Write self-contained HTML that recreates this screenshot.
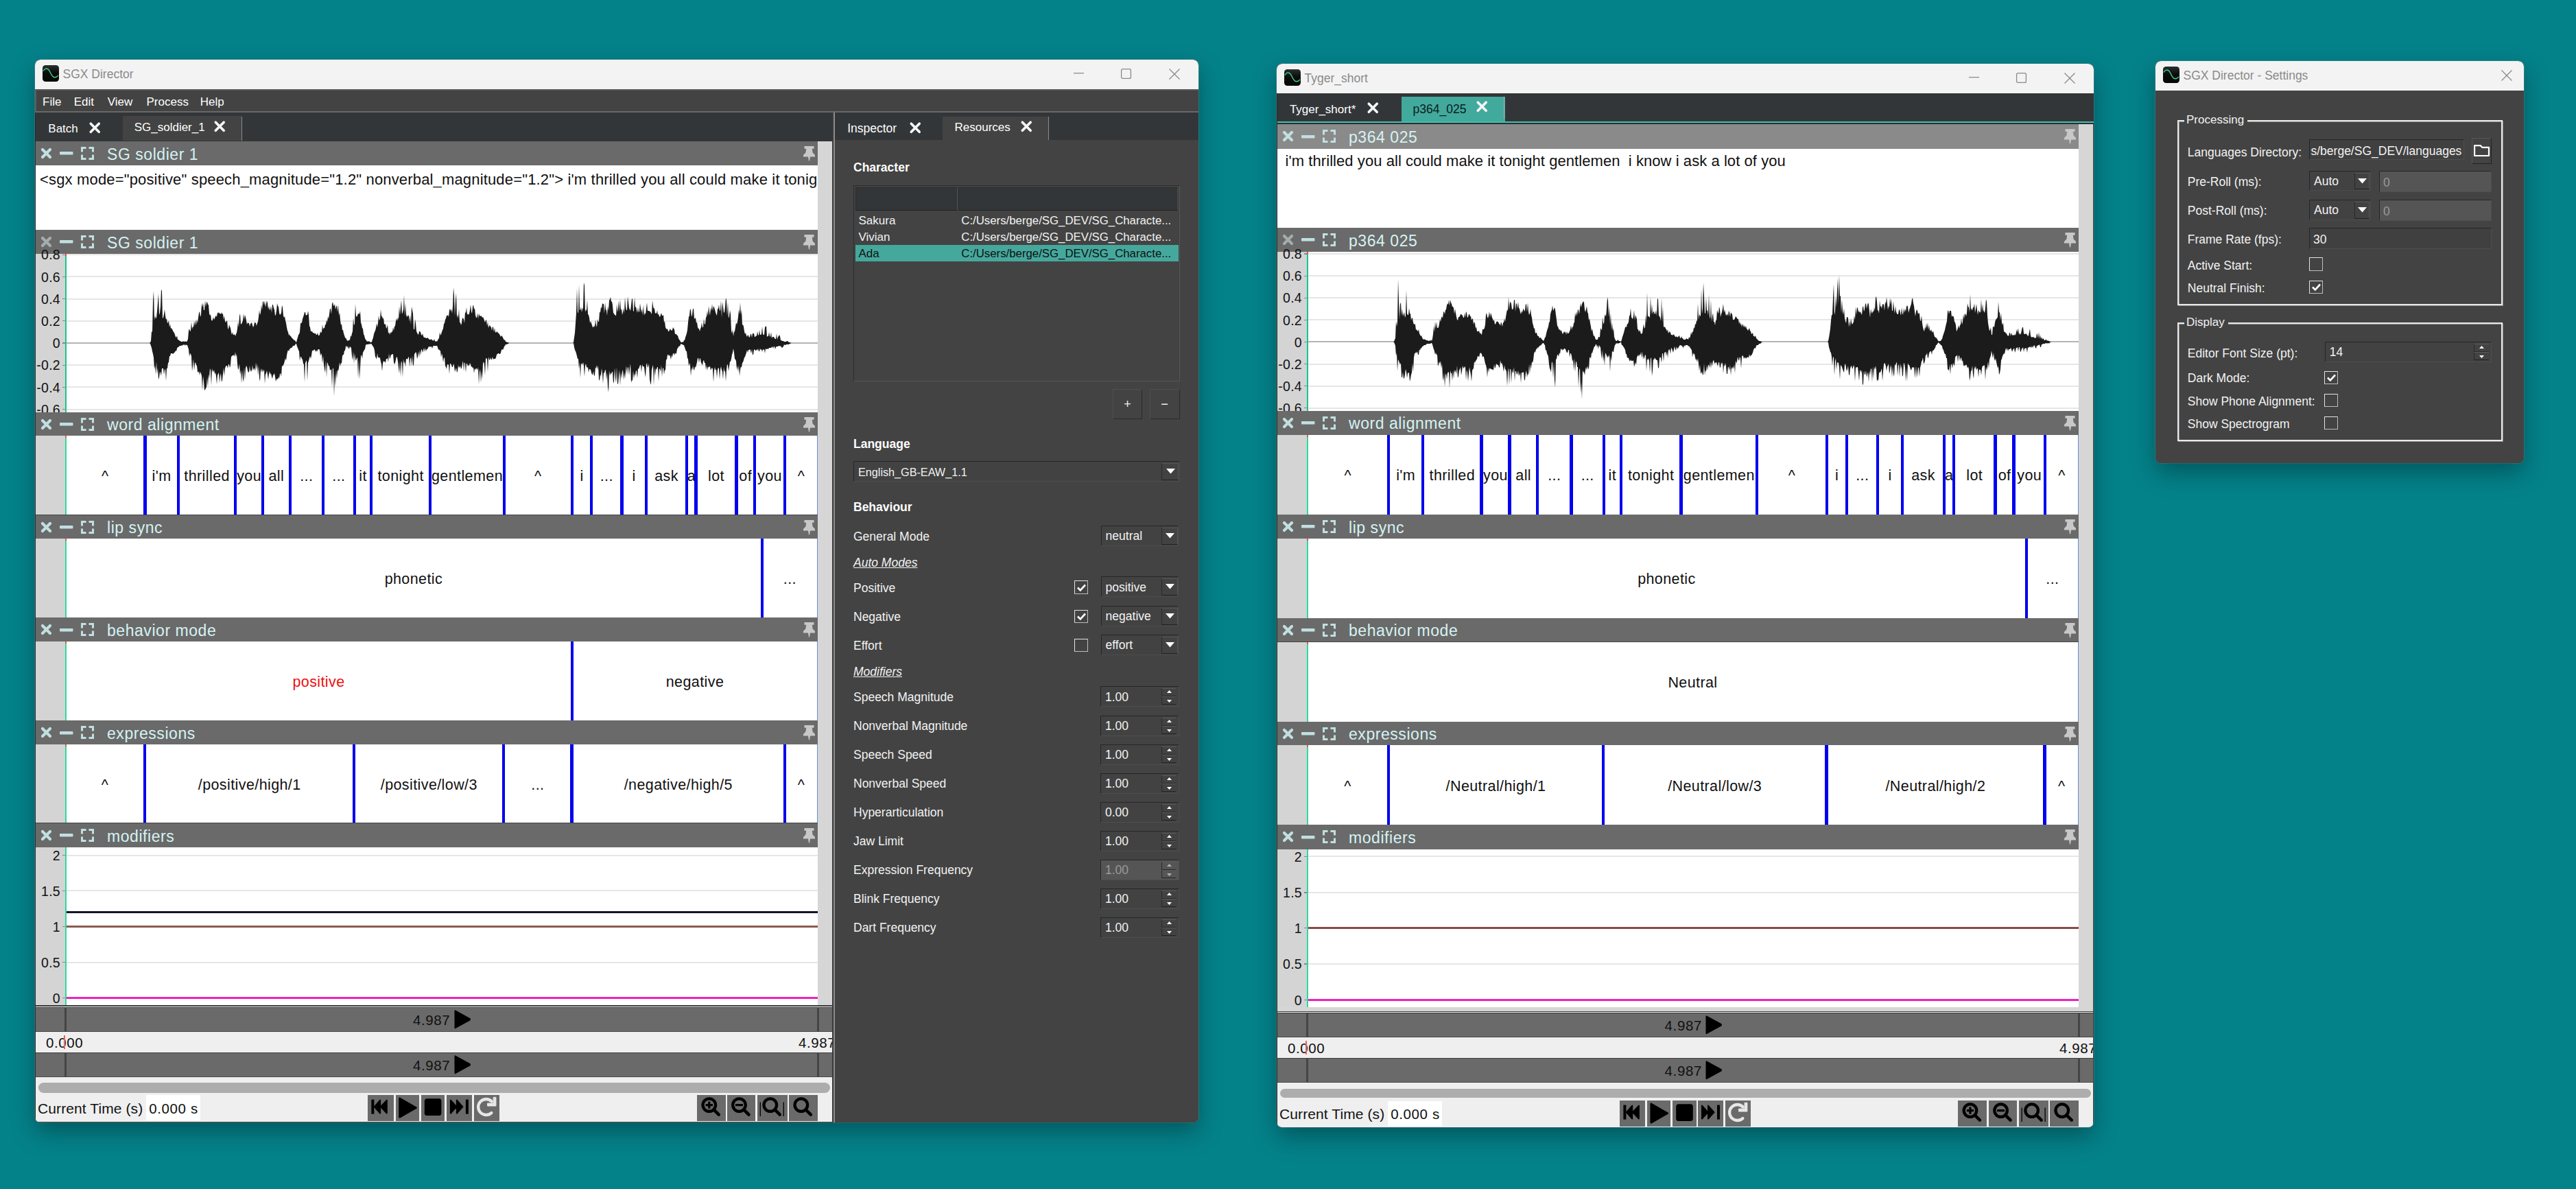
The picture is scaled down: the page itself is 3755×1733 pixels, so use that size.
<!DOCTYPE html><html><head><meta charset="utf-8"><style>
html,body{margin:0;padding:0;} body{width:3755px;height:1733px;overflow:hidden;position:relative;background:#04828a;font-family:"Liberation Sans", sans-serif;} div{box-sizing:border-box;} svg{position:absolute;overflow:visible;}
</style></head><body>
<div style="position:absolute;left:51px;top:87px;width:1696px;height:1549px;border-radius:8px;box-shadow:0 14px 34px rgba(0,25,30,0.40), 0 0 0 1px rgba(110,150,150,0.45);background:#434343"></div>
<div style="position:absolute;left:51px;top:87px;width:1696px;height:1549px;border-radius:8px;overflow:hidden">
<div style="position:absolute;left:-51px;top:-87px;width:3755px;height:1733px">
<div style="position:absolute;left:51px;top:87px;width:1696px;height:43px;background:#f3f3f3;border-radius:8px 8px 0 0;"></div>
<svg style="left:62px;top:95px;" width="24" height="24" viewBox="0 0 24 24"><defs><linearGradient id="ig62" x1="0" y1="0" x2="0" y2="1"><stop offset="0" stop-color="#2a2f31"/><stop offset="0.45" stop-color="#0c0e0e"/><stop offset="1" stop-color="#060707"/></linearGradient></defs><rect x="0" y="0" width="24" height="24" rx="4.5" fill="url(#ig62)"/><path d="M1 8.5 C4 3.5, 8 3.5, 11 10 S17 21, 23 15" fill="none" stroke="#3fd483" stroke-width="1.4"/></svg>
<div style="position:absolute;left:91.5px;top:107.9px;font-size:17.5px;color:#8a8a8a;white-space:pre;line-height:0;">SGX Director</div>
<svg style="left:1704px;top:99.5px;" width="16" height="16" viewBox="0 0 16 16"><path d="M0.5 0.5 L15.5 15.5 M15.5 0.5 L0.5 15.5" stroke="#8a8a8a" stroke-width="1.3"/></svg>
<svg style="left:1633.5px;top:100px;" width="15" height="15" viewBox="0 0 15 15"><rect x="0.6" y="0.6" width="13.8" height="13.8" rx="2" fill="none" stroke="#8a8a8a" stroke-width="1.3"/></svg>
<svg style="left:1564.5px;top:106.2px;" width="15" height="2" viewBox="0 0 15 2"><path d="M0 0.6 L15 0.6" stroke="#8a8a8a" stroke-width="1.3"/></svg>
<div style="position:absolute;left:51px;top:130px;width:1696px;height:34px;background:#434343;border-top:2px solid #575757;border-left:2px solid #5e5e5e;border-bottom:2.5px solid #686868;"></div>
<div style="position:absolute;left:62.1px;top:149.2px;font-size:17px;color:#ffffff;white-space:pre;line-height:0;">File</div>
<div style="position:absolute;left:107.7px;top:149.2px;font-size:17px;color:#ffffff;white-space:pre;line-height:0;">Edit</div>
<div style="position:absolute;left:156.8px;top:149.2px;font-size:17px;color:#ffffff;white-space:pre;line-height:0;">View</div>
<div style="position:absolute;left:213.5px;top:149.2px;font-size:17px;color:#ffffff;white-space:pre;line-height:0;">Process</div>
<div style="position:absolute;left:291.7px;top:149.2px;font-size:17px;color:#ffffff;white-space:pre;line-height:0;">Help</div>
<div style="position:absolute;left:51px;top:164px;width:1162px;height:41.5px;background:#333638;"></div>
<div style="position:absolute;left:179px;top:169.2px;width:174px;height:36.3px;background:#434343;"></div>
<div style="position:absolute;left:352px;top:170px;width:1.2px;height:35px;background:#8a8a8a;"></div>
<div style="position:absolute;left:70.3px;top:187.9px;font-size:17px;color:#ffffff;white-space:pre;line-height:0;">Batch</div>
<svg style="left:130.8px;top:178.7px;" width="14.5" height="14.5" viewBox="0 0 14.5 14.5"><path d="M1.3 1.3 L13.2 13.2 M13.2 1.3 L1.3 13.2" stroke="#f6f6f6" stroke-width="3.7" stroke-linecap="round"/></svg>
<div style="position:absolute;left:195.7px;top:186.2px;font-size:17px;color:#ffffff;white-space:pre;line-height:0;">SG_soldier_1</div>
<svg style="left:312.6px;top:176.9px;" width="14.5" height="14.5" viewBox="0 0 14.5 14.5"><path d="M1.3 1.3 L13.2 13.2 M13.2 1.3 L1.3 13.2" stroke="#f6f6f6" stroke-width="3.7" stroke-linecap="round"/></svg>
<div style="position:absolute;left:1213px;top:164px;width:4px;height:1472px;background:#3a3a3a;"></div>
<div style="position:absolute;left:1214.5px;top:164px;width:2px;height:1472px;background:#8c8c8c;"></div>
<div style="position:absolute;left:1217px;top:164px;width:530px;height:40px;background:#333638;"></div>
<div style="position:absolute;left:1374px;top:169.5px;width:155px;height:34.5px;background:#434343;"></div>
<div style="position:absolute;left:1528px;top:170px;width:1.2px;height:34px;background:#8a8a8a;"></div>
<div style="position:absolute;left:1235.2px;top:186.9px;font-size:17.5px;color:#ffffff;white-space:pre;line-height:0;">Inspector</div>
<svg style="left:1326.8px;top:178.6px;" width="14.5" height="14.5" viewBox="0 0 14.5 14.5"><path d="M1.3 1.3 L13.2 13.2 M13.2 1.3 L1.3 13.2" stroke="#f6f6f6" stroke-width="3.7" stroke-linecap="round"/></svg>
<div style="position:absolute;left:1391.5px;top:185.6px;font-size:17px;color:#ffffff;white-space:pre;line-height:0;">Resources</div>
<svg style="left:1488.5px;top:176.9px;" width="14.5" height="14.5" viewBox="0 0 14.5 14.5"><path d="M1.3 1.3 L13.2 13.2 M13.2 1.3 L1.3 13.2" stroke="#f6f6f6" stroke-width="3.7" stroke-linecap="round"/></svg>
<div style="position:absolute;left:1217px;top:204px;width:530px;height:1432px;background:#434343;"></div>
<div style="position:absolute;left:1192px;top:205.5px;width:21px;height:1259.7px;background:#d6d6d6;"></div>
<div style="position:absolute;left:52px;top:205.5px;width:1140px;height:35.5px;background:#6a6a6a;"></div>
<svg style="left:60px;top:215.8px;" width="15" height="15" viewBox="0 0 15 15"><path d="M2 2 L13 13 M13 2 L2 13" stroke="#c2dfe0" stroke-width="4.2" stroke-linecap="round"/></svg>
<svg style="left:87px;top:221.1px;" width="19.5" height="4.4" viewBox="0 0 19.5 4.4"><rect x="0" y="0" width="19.5" height="4.4" rx="1" fill="#c2dfe0"/></svg>
<svg style="left:118px;top:213.8px;" width="19" height="19" viewBox="0 0 19 19"><path d="M1.5 7.5 V1.5 H7.5 M11.5 1.5 H17.5 V7.5 M17.5 11.5 V17.5 H11.5 M7.5 17.5 H1.5 V11.5" fill="none" stroke="#c2dfe0" stroke-width="3"/></svg>
<div style="position:absolute;left:156px;top:224.5px;font-size:23px;color:#d5f3f3;white-space:pre;line-height:0;letter-spacing:0.55px;">SG soldier 1</div>
<svg style="left:1170.5px;top:212.5px;" width="17" height="22" viewBox="0 0 17 22"><path d="M1.5 0 H15.5 V3.8 H12.8 L13.6 9.5 L17 13 V15.5 H10 L9 21.5 H8 L7 15.5 H0 V13 L3.4 9.5 L4.2 3.8 H1.5 Z" fill="#c8c8c8"/></svg>
<div style="position:absolute;left:52px;top:241px;width:1140px;height:94px;background:#ffffff;"></div>
<div style="position:absolute;left:52px;top:241px;width:1140px;height:94px;overflow:hidden">
<div style="position:absolute;left:6px;top:20.8px;font-size:22px;color:#111;white-space:pre;line-height:0;letter-spacing:0.16px">&lt;sgx mode="positive" speech_magnitude="1.2" nonverbal_magnitude="1.2"&gt; i'm thrilled you all could make it tonight gentlemen  i know i ask a lot of you&lt;/sgx&gt;</div>
</div>
<div style="position:absolute;left:52px;top:335px;width:1140px;height:35px;background:#6a6a6a;"></div>
<svg style="left:60px;top:345px;" width="15" height="15" viewBox="0 0 15 15"><path d="M2 2 L13 13 M13 2 L2 13" stroke="#a4adad" stroke-width="4.2" stroke-linecap="round"/></svg>
<svg style="left:87px;top:350.3px;" width="19.5" height="4.4" viewBox="0 0 19.5 4.4"><rect x="0" y="0" width="19.5" height="4.4" rx="1" fill="#c2dfe0"/></svg>
<svg style="left:118px;top:343px;" width="19" height="19" viewBox="0 0 19 19"><path d="M1.5 7.5 V1.5 H7.5 M11.5 1.5 H17.5 V7.5 M17.5 11.5 V17.5 H11.5 M7.5 17.5 H1.5 V11.5" fill="none" stroke="#c2dfe0" stroke-width="3"/></svg>
<div style="position:absolute;left:156px;top:353.8px;font-size:23px;color:#d5f3f3;white-space:pre;line-height:0;letter-spacing:0.55px;">SG soldier 1</div>
<svg style="left:1170.5px;top:342px;" width="17" height="22" viewBox="0 0 17 22"><path d="M1.5 0 H15.5 V3.8 H12.8 L13.6 9.5 L17 13 V15.5 H10 L9 21.5 H8 L7 15.5 H0 V13 L3.4 9.5 L4.2 3.8 H1.5 Z" fill="#c8c8c8"/></svg>
<div style="position:absolute;left:52px;top:370px;width:1140px;height:230.5px;background:#fff;"></div>
<div style="position:absolute;left:52px;top:370px;width:43px;height:230.5px;background:#d4d4d4;"></div>
<div style="position:absolute;left:95px;top:370.2px;width:1097px;height:2px;background:#e6e6e6;"></div>
<div style="position:absolute;left:95px;top:402.4px;width:1097px;height:2px;background:#e6e6e6;"></div>
<div style="position:absolute;left:95px;top:434.6px;width:1097px;height:2px;background:#e6e6e6;"></div>
<div style="position:absolute;left:95px;top:466.8px;width:1097px;height:2px;background:#e6e6e6;"></div>
<div style="position:absolute;left:95px;top:499px;width:1097px;height:2px;background:#b4b4b4;"></div>
<div style="position:absolute;left:95px;top:531.2px;width:1097px;height:2px;background:#e6e6e6;"></div>
<div style="position:absolute;left:95px;top:563.4px;width:1097px;height:2px;background:#e6e6e6;"></div>
<div style="position:absolute;left:95px;top:595.6px;width:1097px;height:2px;background:#e6e6e6;"></div>
<div style="position:absolute;left:91px;top:370.6px;width:4px;height:1.2px;background:#888;"></div>
<div style="position:absolute;left:91px;top:402.8px;width:4px;height:1.2px;background:#888;"></div>
<div style="position:absolute;left:91px;top:435px;width:4px;height:1.2px;background:#888;"></div>
<div style="position:absolute;left:91px;top:467.2px;width:4px;height:1.2px;background:#888;"></div>
<div style="position:absolute;left:91px;top:499.4px;width:4px;height:1.2px;background:#888;"></div>
<div style="position:absolute;left:91px;top:531.6px;width:4px;height:1.2px;background:#888;"></div>
<div style="position:absolute;left:91px;top:563.8px;width:4px;height:1.2px;background:#888;"></div>
<div style="position:absolute;left:91px;top:596px;width:4px;height:1.2px;background:#888;"></div>
<svg style="left:95px;top:370px;overflow:hidden" width="1097" height="230.5"><g transform="translate(0,-370)"><path d="M0 500 1 500 2 500 3 500 4 500 5 500 6 500 7 500 8 500 9 500 10 500 11 500 12 500 13 500 14 500 15 500 16 500 17 500 18 500 19 500 20 500 21 500 22 500 23 500 24 500 25 500 26 500 27 500 28 500 29 500 30 500 31 500 32 500 33 500 34 500 35 500 36 500 37 500 38 500 39 500 40 500 41 500 42 500 43 500 44 500 45 500 46 500 47 500 48 500 49 500 50 500 51 500 52 500 53 500 54 500 55 500 56 500 57 500 58 500 59 500 60 500 61 500 62 500 63 500 64 500 65 500 66 500 67 500 68 500 69 500 70 500 71 500 72 500 73 500 74 500 75 500 76 500 77 500 78 500 79 500 80 500 81 500 82 500 83 500 84 500 85 500 86 500 87 500 88 500 89 500 90 500 91 500 92 500 93 500 94 500 95 500 96 500 97 500 98 500 99 500 100 500 101 500 102 500 103 500 104 500 105 500 106 500 107 500 108 500 109 500 110 500 111 500 112 500 113 500 114 500 115 500 116 500 117 500 118 500 119 500 120 500 121 500 122 500 123 500 124 499 125 497 126 483 127 484 128 438 129 424 130 467 131 460 132 464 133 463 134 454 135 441 136 428 137 459 138 456 139 447 140 422 141 424 142 464 143 463 144 458 145 451 146 460 147 466 148 464 149 471 150 470 151 467 152 477 153 472 154 479 155 478 156 480 157 482 158 484 159 485 160 488 161 491 162 492 163 489 164 495 165 495 166 496 167 497 168 497 169 498 170 498 171 498 172 497 173 498 174 498 175 497 176 498 177 498 178 497 179 494 180 482 181 479 182 483 183 482 184 469 185 480 186 476 187 477 188 468 189 475 190 466 191 474 192 465 193 471 194 463 195 456 196 454 197 462 198 459 199 442 200 448 201 441 202 452 203 452 204 438 205 447 206 441 207 440 208 444 209 444 210 457 211 460 212 458 213 466 214 468 215 466 216 462 217 466 218 464 219 461 220 460 221 462 222 455 223 457 224 455 225 457 226 457 227 458 228 455 229 458 230 457 231 466 232 460 233 468 234 470 235 468 236 467 237 478 238 480 239 473 240 476 241 478 242 484 243 488 244 484 245 488 246 488 247 487 248 490 249 487 250 485 251 479 252 469 253 477 254 461 255 457 256 473 257 472 258 470 259 467 260 457 261 466 262 459 263 462 264 467 265 473 266 470 267 471 268 471 269 476 270 472 271 471 272 470 273 474 274 477 275 475 276 470 277 470 278 471 279 475 280 471 281 469 282 462 283 452 284 459 285 456 286 444 287 452 288 440 289 439 290 445 291 438 292 448 293 443 294 438 295 442 296 451 297 446 298 452 299 451 300 446 301 456 302 444 303 444 304 449 305 451 306 460 307 459 308 453 309 442 310 446 311 447 312 456 313 459 314 458 315 456 316 445 317 448 318 460 319 463 320 461 321 467 322 471 323 477 324 482 325 484 326 489 327 487 328 490 329 490 330 492 331 493 332 494 333 495 334 496 335 496 336 498 337 499 338 495 339 492 340 488 341 487 342 484 343 472 344 470 345 471 346 465 347 462 348 459 349 455 350 455 351 460 352 459 353 459 354 453 355 459 356 475 357 477 358 483 359 483 360 483 361 485 362 485 363 486 364 486 365 486 366 488 367 488 368 485 369 489 370 489 371 488 372 483 373 485 374 484 375 473 376 480 377 478 378 478 379 473 380 473 381 466 382 470 383 461 384 465 385 458 386 450 387 450 388 458 389 443 390 440 391 445 392 446 393 443 394 451 395 447 396 445 397 455 398 444 399 460 400 455 401 466 402 474 403 472 404 481 405 481 406 486 407 489 408 492 409 493 410 494 411 497 412 496 413 497 414 495 415 496 416 489 417 491 418 486 419 483 420 463 421 474 422 472 423 443 424 460 425 462 426 460 427 457 428 457 429 458 430 453 431 470 432 473 433 478 434 479 435 487 436 489 437 493 438 495 439 496 440 498 441 497 442 498 443 497 444 498 445 499 446 499 447 498 448 495 449 492 450 487 451 484 452 482 453 478 454 471 455 477 456 471 457 460 458 467 459 465 460 451 461 461 462 461 463 465 464 463 465 472 466 473 467 472 468 479 469 477 470 473 471 486 472 484 473 488 474 484 475 486 476 483 477 484 478 477 479 482 480 476 481 475 482 468 483 464 484 468 485 462 486 466 487 446 488 459 489 448 490 437 491 458 492 455 493 451 494 430 495 461 496 442 497 458 498 462 499 461 500 459 501 461 502 469 503 459 504 473 505 447 506 452 507 457 508 480 509 480 510 465 511 471 512 483 513 485 514 487 515 488 516 483 517 483 518 484 519 488 520 489 521 486 522 490 523 492 524 492 525 492 526 493 527 493 528 492 529 493 530 494 531 495 532 495 533 495 534 494 535 496 536 496 537 497 538 494 539 497 540 498 541 497 542 498 543 496 544 494 545 493 546 484 547 489 548 487 549 484 550 481 551 479 552 472 553 471 554 466 555 464 556 460 557 460 558 459 559 462 560 452 561 450 562 454 563 450 564 457 565 447 566 419 567 430 568 461 569 438 570 427 571 463 572 458 573 464 574 450 575 470 576 470 577 474 578 471 579 463 580 464 581 465 582 471 583 455 584 456 585 448 586 459 587 457 588 459 589 457 590 452 591 444 592 454 593 457 594 447 595 444 596 451 597 449 598 459 599 463 600 463 601 456 602 465 603 457 604 460 605 461 606 460 607 461 608 463 609 462 610 464 611 467 612 470 613 467 614 466 615 475 616 469 617 478 618 475 619 474 620 476 621 477 622 482 623 476 624 477 625 484 626 478 627 484 628 485 629 483 630 484 631 485 632 486 633 487 634 489 635 491 636 489 637 490 638 492 639 494 640 496 641 495 642 498 643 498 644 499 645 499 646 499 647 500 648 500 649 500 650 500 651 500 652 500 653 500 654 500 655 500 656 500 657 500 658 500 659 500 660 500 661 500 662 500 663 500 664 500 665 500 666 500 667 500 668 500 669 500 670 500 671 500 672 500 673 500 674 500 675 500 676 500 677 500 678 500 679 500 680 500 681 500 682 500 683 500 684 500 685 500 686 500 687 500 688 500 689 500 690 500 691 500 692 500 693 500 694 500 695 500 696 500 697 500 698 500 699 500 700 500 701 500 702 500 703 500 704 500 705 500 706 500 707 500 708 500 709 500 710 500 711 500 712 500 713 500 714 500 715 500 716 500 717 500 718 500 719 500 720 500 721 500 722 500 723 500 724 500 725 500 726 500 727 500 728 500 729 500 730 500 731 500 732 500 733 500 734 500 735 500 736 500 737 500 738 500 739 500 740 500 741 499 742 492 743 485 744 471 745 456 746 420 747 454 748 457 749 415 750 451 751 452 752 447 753 455 754 450 755 449 756 412 757 416 758 455 759 451 760 453 761 437 762 458 763 459 764 463 765 471 766 468 767 471 768 474 769 477 770 477 771 474 772 477 773 466 774 473 775 477 776 465 777 469 778 469 779 454 780 456 781 447 782 450 783 442 784 443 785 443 786 457 787 441 788 451 789 452 790 460 791 446 792 453 793 438 794 436 795 433 796 440 797 439 798 445 799 456 800 457 801 459 802 459 803 461 804 443 805 455 806 449 807 438 808 455 809 436 810 452 811 450 812 459 813 455 814 449 815 457 816 433 817 447 818 452 819 452 820 432 821 440 822 449 823 451 824 453 825 445 826 436 827 435 828 454 829 453 830 433 831 448 832 447 833 452 834 456 835 448 836 455 837 454 838 442 839 450 840 456 841 449 842 460 843 444 844 460 845 456 846 458 847 450 848 441 849 453 850 453 851 453 852 454 853 454 854 456 855 458 856 438 857 446 858 450 859 449 860 457 861 456 862 457 863 452 864 459 865 457 866 461 867 462 868 459 869 456 870 460 871 460 872 459 873 470 874 468 875 477 876 479 877 480 878 479 879 483 880 483 881 481 882 479 883 481 884 482 885 481 886 477 887 479 888 480 889 487 890 487 891 487 892 489 893 489 894 493 895 495 896 496 897 498 898 499 899 499 900 498 901 499 902 496 903 496 904 492 905 489 906 486 907 481 908 470 909 462 910 460 911 450 912 452 913 462 914 459 915 450 916 450 917 465 918 464 919 463 920 471 921 469 922 477 923 479 924 479 925 483 926 479 927 477 928 470 929 477 930 477 931 464 932 473 933 472 934 463 935 461 936 453 937 461 938 446 939 454 940 460 941 448 942 453 943 443 944 453 945 446 946 448 947 451 948 455 949 458 950 460 951 450 952 450 953 444 954 453 955 452 956 438 957 463 958 440 959 447 960 455 961 456 962 447 963 434 964 438 965 461 966 440 967 464 968 461 969 452 970 458 971 482 972 486 973 480 974 490 975 484 976 483 977 477 978 470 979 473 980 469 981 462 982 451 983 458 984 441 985 459 986 451 987 474 988 473 989 476 990 483 991 487 992 485 993 489 994 491 995 488 996 489 997 492 998 491 999 487 1000 487 1001 492 1002 486 1003 486 1004 486 1005 491 1006 491 1007 489 1008 490 1009 483 1010 488 1011 489 1012 481 1013 488 1014 488 1015 487 1016 476 1017 487 1018 488 1019 488 1020 477 1021 476 1022 475 1023 491 1024 490 1025 490 1026 484 1027 490 1028 491 1029 484 1030 493 1031 491 1032 491 1033 491 1034 493 1035 494 1036 494 1037 486 1038 495 1039 491 1040 490 1041 488 1042 490 1043 496 1044 496 1045 497 1046 497 1047 497 1048 498 1049 498 1050 498 1051 498 1052 497 1053 497 1054 498 1055 499 1056 499 1057 499 1058 500 1059 500 1060 500 1061 500 1062 500 1063 500 1064 500 1065 500 1066 500 1067 500 1068 500 1069 500 1070 500 1071 500 1072 500 1073 500 1074 500 1075 500 1076 500 1077 500 1078 500 1079 500 1080 500 1081 500 1082 500 1083 500 1084 500 1085 500 1086 500 1087 500 1088 500 1089 500 1090 500 1091 500 1092 500 1093 500 1094 500 1095 500 1096 500 1097 500 L1097 500 1096 500 1095 500 1094 500 1093 500 1092 500 1091 500 1090 500 1089 500 1088 500 1087 500 1086 500 1085 500 1084 500 1083 500 1082 500 1081 500 1080 500 1079 500 1078 500 1077 500 1076 500 1075 500 1074 500 1073 500 1072 500 1071 500 1070 500 1069 500 1068 500 1067 500 1066 500 1065 500 1064 500 1063 500 1062 500 1061 500 1060 500 1059 500 1058 500 1057 501 1056 501 1055 502 1054 502 1053 502 1052 502 1051 502 1050 503 1049 503 1048 502 1047 505 1046 506 1045 507 1044 506 1043 504 1042 505 1041 504 1040 504 1039 505 1038 505 1037 505 1036 506 1035 509 1034 505 1033 505 1032 508 1031 505 1030 506 1029 507 1028 507 1027 507 1026 507 1025 509 1024 508 1023 509 1022 509 1021 508 1020 515 1019 509 1018 510 1017 509 1016 513 1015 509 1014 510 1013 508 1012 512 1011 512 1010 508 1009 511 1008 509 1007 511 1006 511 1005 509 1004 510 1003 517 1002 517 1001 509 1000 515 999 511 998 509 997 510 996 510 995 514 994 510 993 514 992 517 991 520 990 521 989 525 988 528 987 529 986 536 985 534 984 539 983 548 982 532 981 542 980 533 979 539 978 526 977 524 976 523 975 514 974 508 973 514 972 517 971 523 970 527 969 527 968 534 967 541 966 532 965 531 964 539 963 556 962 540 961 542 960 535 959 553 958 542 957 539 956 534 955 539 954 553 953 537 952 536 951 539 950 551 949 538 948 540 947 535 946 540 945 557 944 538 943 536 942 537 941 540 940 534 939 534 938 536 937 534 936 540 935 532 934 539 933 529 932 529 931 525 930 526 929 533 928 530 927 529 926 523 925 522 924 529 923 522 922 522 921 528 920 532 919 536 918 534 917 540 916 538 915 533 914 540 913 536 912 548 911 532 910 529 909 534 908 523 907 522 906 512 905 512 904 509 903 506 902 503 901 503 900 502 899 502 898 501 897 502 896 505 895 504 894 506 893 507 892 509 891 515 890 516 889 514 888 518 887 515 886 515 885 521 884 517 883 524 882 520 881 517 880 519 879 517 878 517 877 524 876 524 875 540 874 539 873 546 872 536 871 537 870 549 869 532 868 542 867 538 866 537 865 556 864 535 863 535 862 539 861 537 860 548 859 535 858 562 857 532 856 535 855 539 854 561 853 558 852 553 851 530 850 534 849 536 848 529 847 532 846 550 845 544 844 535 843 534 842 534 841 531 840 543 839 532 838 532 837 535 836 538 835 537 834 551 833 541 832 540 831 548 830 544 829 552 828 540 827 555 826 554 825 558 824 530 823 537 822 547 821 536 820 535 819 546 818 533 817 542 816 552 815 543 814 554 813 539 812 542 811 552 810 542 809 562 808 539 807 548 806 560 805 559 804 535 803 558 802 550 801 536 800 556 799 559 798 542 797 542 796 546 795 543 794 548 793 540 792 572 791 564 790 543 789 554 788 540 787 539 786 544 785 543 784 559 783 544 782 537 781 549 780 545 779 555 778 553 777 533 776 539 775 532 774 537 773 535 772 547 771 548 770 541 769 546 768 546 767 543 766 539 765 538 764 538 763 543 762 535 761 536 760 535 759 530 758 533 757 549 756 533 755 528 754 531 753 531 752 529 751 551 750 528 749 538 748 523 747 523 746 519 745 515 744 512 743 510 742 506 741 500 740 500 739 500 738 500 737 500 736 500 735 500 734 500 733 500 732 500 731 500 730 500 729 500 728 500 727 500 726 500 725 500 724 500 723 500 722 500 721 500 720 500 719 500 718 500 717 500 716 500 715 500 714 500 713 500 712 500 711 500 710 500 709 500 708 500 707 500 706 500 705 500 704 500 703 500 702 500 701 500 700 500 699 500 698 500 697 500 696 500 695 500 694 500 693 500 692 500 691 500 690 500 689 500 688 500 687 500 686 500 685 500 684 500 683 500 682 500 681 500 680 500 679 500 678 500 677 500 676 500 675 500 674 500 673 500 672 500 671 500 670 500 669 500 668 500 667 500 666 500 665 500 664 500 663 500 662 500 661 500 660 500 659 500 658 500 657 500 656 500 655 500 654 500 653 500 652 500 651 500 650 500 649 500 648 500 647 500 646 501 645 501 644 502 643 502 642 502 641 504 640 505 639 508 638 510 637 509 636 510 635 514 634 516 633 516 632 515 631 515 630 516 629 517 628 521 627 523 626 523 625 523 624 524 623 520 622 524 621 524 620 521 619 525 618 524 617 520 616 542 615 523 614 522 613 523 612 547 611 531 610 527 609 530 608 553 607 541 606 558 605 538 604 543 603 560 602 535 601 540 600 537 599 537 598 539 597 537 596 544 595 535 594 537 593 534 592 535 591 531 590 529 589 533 588 532 587 534 586 530 585 530 584 543 583 530 582 528 581 541 580 526 579 530 578 536 577 538 576 533 575 535 574 536 573 532 572 541 571 543 570 536 569 539 568 542 567 533 566 530 565 535 564 535 563 532 562 530 561 530 560 545 559 532 558 531 557 531 556 538 555 535 554 533 553 521 552 522 551 528 550 519 549 515 548 521 547 511 546 511 545 509 544 510 543 506 542 504 541 504 540 504 539 504 538 504 537 504 536 505 535 508 534 505 533 505 532 506 531 505 530 505 529 507 528 509 527 509 526 512 525 507 524 513 523 507 522 511 521 514 520 509 519 510 518 518 517 510 516 521 515 512 514 520 513 523 512 515 511 513 510 515 509 516 508 532 507 533 506 518 505 534 504 521 503 523 502 535 501 520 500 521 499 524 498 523 497 523 496 535 495 527 494 530 493 523 492 550 491 529 490 526 489 549 488 526 487 544 486 536 485 527 484 521 483 520 482 524 481 529 480 531 479 528 478 516 477 516 476 517 475 517 474 521 473 523 472 515 471 528 470 522 469 523 468 523 467 529 466 527 465 527 464 526 463 530 462 541 461 531 460 527 459 522 458 521 457 521 456 521 455 515 454 524 453 521 452 520 451 511 450 507 449 505 448 504 447 502 446 501 445 501 444 502 443 501 442 502 441 502 440 502 439 502 438 503 437 509 436 510 435 512 434 514 433 523 432 517 431 519 430 537 429 553 428 523 427 552 426 521 425 522 424 526 423 523 422 515 421 530 420 512 419 525 418 519 417 507 416 506 415 505 414 508 413 508 412 504 411 507 410 504 409 505 408 511 407 511 406 517 405 517 404 519 403 530 402 529 401 534 400 528 399 536 398 541 397 539 396 552 395 540 394 564 393 544 392 578 391 538 390 536 389 565 388 538 387 539 386 540 385 533 384 534 383 530 382 528 381 550 380 525 379 543 378 538 377 531 376 518 375 530 374 517 373 515 372 519 371 510 370 509 369 509 368 510 367 513 366 510 365 513 364 510 363 509 362 511 361 511 360 511 359 518 358 523 357 519 356 522 355 526 354 529 353 555 352 525 351 527 350 529 349 557 348 531 347 530 346 524 345 523 344 520 343 520 342 526 341 512 340 510 339 507 338 505 337 501 336 501 335 503 334 504 333 504 332 504 331 506 330 507 329 507 328 508 327 509 326 512 325 510 324 513 323 518 322 526 321 522 320 526 319 530 318 532 317 534 316 533 315 549 314 544 313 545 312 552 311 549 310 553 309 552 308 553 307 556 306 549 305 544 304 546 303 547 302 552 301 549 300 544 299 546 298 541 297 545 296 553 295 546 294 540 293 544 292 546 291 559 290 539 289 540 288 543 287 537 286 543 285 537 284 556 283 551 282 533 281 547 280 530 279 539 278 528 277 541 276 537 275 537 274 540 273 532 272 542 271 539 270 542 269 533 268 542 267 543 266 540 265 535 264 533 263 537 262 554 261 535 260 557 259 552 258 539 257 559 256 539 255 546 254 530 253 537 252 539 251 530 250 516 249 520 248 513 247 520 246 517 245 518 244 518 243 519 242 520 241 532 240 536 239 531 238 531 237 537 236 533 235 533 234 534 233 537 232 548 231 536 230 545 229 554 228 557 227 544 226 548 225 558 224 543 223 545 222 547 221 560 220 548 219 543 218 545 217 539 216 542 215 541 214 537 213 562 212 540 211 537 210 552 209 545 208 564 207 550 206 564 205 566 204 568 203 569 202 556 201 548 200 569 199 548 198 544 197 542 196 547 195 541 194 543 193 542 192 533 191 532 190 528 189 530 188 540 187 523 186 533 185 541 184 519 183 516 182 515 181 520 180 509 179 506 178 503 177 503 176 502 175 504 174 502 173 503 172 502 171 504 170 503 169 504 168 504 167 504 166 505 165 506 164 506 163 508 162 512 161 511 160 513 159 514 158 515 157 516 156 515 155 515 154 515 153 519 152 519 151 528 150 529 149 537 148 537 147 555 146 538 145 539 144 546 143 537 142 537 141 537 140 548 139 543 138 542 137 550 136 553 135 536 134 545 133 527 132 546 131 533 130 538 129 521 128 516 127 512 126 507 125 504 124 501 123 500 122 500 121 500 120 500 119 500 118 500 117 500 116 500 115 500 114 500 113 500 112 500 111 500 110 500 109 500 108 500 107 500 106 500 105 500 104 500 103 500 102 500 101 500 100 500 99 500 98 500 97 500 96 500 95 500 94 500 93 500 92 500 91 500 90 500 89 500 88 500 87 500 86 500 85 500 84 500 83 500 82 500 81 500 80 500 79 500 78 500 77 500 76 500 75 500 74 500 73 500 72 500 71 500 70 500 69 500 68 500 67 500 66 500 65 500 64 500 63 500 62 500 61 500 60 500 59 500 58 500 57 500 56 500 55 500 54 500 53 500 52 500 51 500 50 500 49 500 48 500 47 500 46 500 45 500 44 500 43 500 42 500 41 500 40 500 39 500 38 500 37 500 36 500 35 500 34 500 33 500 32 500 31 500 30 500 29 500 28 500 27 500 26 500 25 500 24 500 23 500 22 500 21 500 20 500 19 500 18 500 17 500 16 500 15 500 14 500 13 500 12 500 11 500 10 500 9 500 8 500 7 500 6 500 5 500 4 500 3 500 2 500 1 500 0 500Z" fill="#1b1b1b"/></g></svg>
<div style="position:absolute;left:95px;top:370px;width:2px;height:230.5px;background:#14c890;"></div>
<div style="position:absolute;left:95px;top:370px;width:2px;height:2.5px;background:#ff4040;"></div>
<div style="position:absolute;left:-912px;width:1000px;text-align:right;top:371.4px;font-size:19.5px;color:#111;white-space:pre;line-height:0;letter-spacing:0.3px;">0.8</div>
<div style="position:absolute;left:-912px;width:1000px;text-align:right;top:403.6px;font-size:19.5px;color:#111;white-space:pre;line-height:0;letter-spacing:0.3px;">0.6</div>
<div style="position:absolute;left:-912px;width:1000px;text-align:right;top:435.8px;font-size:19.5px;color:#111;white-space:pre;line-height:0;letter-spacing:0.3px;">0.4</div>
<div style="position:absolute;left:-912px;width:1000px;text-align:right;top:468px;font-size:19.5px;color:#111;white-space:pre;line-height:0;letter-spacing:0.3px;">0.2</div>
<div style="position:absolute;left:-912px;width:1000px;text-align:right;top:500.2px;font-size:19.5px;color:#111;white-space:pre;line-height:0;letter-spacing:0.3px;">0</div>
<div style="position:absolute;left:-912px;width:1000px;text-align:right;top:532.4px;font-size:19.5px;color:#111;white-space:pre;line-height:0;letter-spacing:0.3px;">-0.2</div>
<div style="position:absolute;left:-912px;width:1000px;text-align:right;top:564.6px;font-size:19.5px;color:#111;white-space:pre;line-height:0;letter-spacing:0.3px;">-0.4</div>
<div style="position:absolute;left:-912px;width:1000px;text-align:right;top:596.8px;font-size:19.5px;color:#111;white-space:pre;line-height:0;letter-spacing:0.3px;">-0.6</div>
<div style="position:absolute;left:52px;top:600.5px;width:1140px;height:34.9px;background:#6a6a6a;"></div>
<svg style="left:60px;top:610.5px;" width="15" height="15" viewBox="0 0 15 15"><path d="M2 2 L13 13 M13 2 L2 13" stroke="#c2dfe0" stroke-width="4.2" stroke-linecap="round"/></svg>
<svg style="left:87px;top:615.8px;" width="19.5" height="4.4" viewBox="0 0 19.5 4.4"><rect x="0" y="0" width="19.5" height="4.4" rx="1" fill="#c2dfe0"/></svg>
<svg style="left:118px;top:608.5px;" width="19" height="19" viewBox="0 0 19 19"><path d="M1.5 7.5 V1.5 H7.5 M11.5 1.5 H17.5 V7.5 M17.5 11.5 V17.5 H11.5 M7.5 17.5 H1.5 V11.5" fill="none" stroke="#c2dfe0" stroke-width="3"/></svg>
<div style="position:absolute;left:156px;top:619.2px;font-size:23px;color:#d5f3f3;white-space:pre;line-height:0;letter-spacing:0.55px;">word alignment</div>
<svg style="left:1170.5px;top:607.5px;" width="17" height="22" viewBox="0 0 17 22"><path d="M1.5 0 H15.5 V3.8 H12.8 L13.6 9.5 L17 13 V15.5 H10 L9 21.5 H8 L7 15.5 H0 V13 L3.4 9.5 L4.2 3.8 H1.5 Z" fill="#c8c8c8"/></svg>
<div style="position:absolute;left:52px;top:635.4px;width:1140px;height:115.1px;background:#ffffff;"></div>
<div style="position:absolute;left:52px;top:635.4px;width:43px;height:115.1px;background:#d4d4d4;"></div>
<div style="position:absolute;left:95px;top:635.4px;width:1.5px;height:115.1px;background:#2ed8a0;"></div>
<div style="position:absolute;left:95px;top:635.4px;width:1.5px;height:3px;background:#ff5050;"></div>
<div style="position:absolute;left:-346.8px;width:1000px;text-align:center;top:694.4px;font-size:21.5px;color:#111;white-space:pre;line-height:0;letter-spacing:0.4px;">^</div>
<div style="position:absolute;left:-264.4px;width:1000px;text-align:center;top:694.4px;font-size:21.5px;color:#111;white-space:pre;line-height:0;letter-spacing:0.4px;">i'm</div>
<div style="position:absolute;left:-198.4px;width:1000px;text-align:center;top:694.4px;font-size:21.5px;color:#111;white-space:pre;line-height:0;letter-spacing:0.4px;">thrilled</div>
<div style="position:absolute;left:-136.9px;width:1000px;text-align:center;top:694.4px;font-size:21.5px;color:#111;white-space:pre;line-height:0;letter-spacing:0.4px;">you</div>
<div style="position:absolute;left:-97.2px;width:1000px;text-align:center;top:694.4px;font-size:21.5px;color:#111;white-space:pre;line-height:0;letter-spacing:0.4px;">all</div>
<div style="position:absolute;left:-53.2px;width:1000px;text-align:center;top:694.4px;font-size:21.5px;color:#111;white-space:pre;line-height:0;letter-spacing:0.4px;">...</div>
<div style="position:absolute;left:-6.1px;width:1000px;text-align:center;top:694.4px;font-size:21.5px;color:#111;white-space:pre;line-height:0;letter-spacing:0.4px;">...</div>
<div style="position:absolute;left:29.1px;width:1000px;text-align:center;top:694.4px;font-size:21.5px;color:#111;white-space:pre;line-height:0;letter-spacing:0.4px;">it</div>
<div style="position:absolute;left:84.2px;width:1000px;text-align:center;top:694.4px;font-size:21.5px;color:#111;white-space:pre;line-height:0;letter-spacing:0.4px;">tonight</div>
<div style="position:absolute;left:181px;width:1000px;text-align:center;top:694.4px;font-size:21.5px;color:#111;white-space:pre;line-height:0;letter-spacing:0.4px;">gentlemen</div>
<div style="position:absolute;left:284.3px;width:1000px;text-align:center;top:694.4px;font-size:21.5px;color:#111;white-space:pre;line-height:0;letter-spacing:0.4px;">^</div>
<div style="position:absolute;left:348.1px;width:1000px;text-align:center;top:694.4px;font-size:21.5px;color:#111;white-space:pre;line-height:0;letter-spacing:0.4px;">i</div>
<div style="position:absolute;left:384.3px;width:1000px;text-align:center;top:694.4px;font-size:21.5px;color:#111;white-space:pre;line-height:0;letter-spacing:0.4px;">...</div>
<div style="position:absolute;left:424.1px;width:1000px;text-align:center;top:694.4px;font-size:21.5px;color:#111;white-space:pre;line-height:0;letter-spacing:0.4px;">i</div>
<div style="position:absolute;left:471.5px;width:1000px;text-align:center;top:694.4px;font-size:21.5px;color:#111;white-space:pre;line-height:0;letter-spacing:0.4px;">ask</div>
<div style="position:absolute;left:507.9px;width:1000px;text-align:center;top:694.4px;font-size:21.5px;color:#111;white-space:pre;line-height:0;letter-spacing:0.4px;">a</div>
<div style="position:absolute;left:544px;width:1000px;text-align:center;top:694.4px;font-size:21.5px;color:#111;white-space:pre;line-height:0;letter-spacing:0.4px;">lot</div>
<div style="position:absolute;left:586.7px;width:1000px;text-align:center;top:694.4px;font-size:21.5px;color:#111;white-space:pre;line-height:0;letter-spacing:0.4px;">of</div>
<div style="position:absolute;left:622px;width:1000px;text-align:center;top:694.4px;font-size:21.5px;color:#111;white-space:pre;line-height:0;letter-spacing:0.4px;">you</div>
<div style="position:absolute;left:668px;width:1000px;text-align:center;top:694.4px;font-size:21.5px;color:#111;white-space:pre;line-height:0;letter-spacing:0.4px;">^</div>
<div style="position:absolute;left:209.2px;top:635.4px;width:4.4px;height:115.1px;background:#0000ee;"></div>
<div style="position:absolute;left:257.7px;top:635.4px;width:4.4px;height:115.1px;background:#0000ee;"></div>
<div style="position:absolute;left:341.1px;top:635.4px;width:4.4px;height:115.1px;background:#0000ee;"></div>
<div style="position:absolute;left:380.7px;top:635.4px;width:4.4px;height:115.1px;background:#0000ee;"></div>
<div style="position:absolute;left:420.5px;top:635.4px;width:4.4px;height:115.1px;background:#0000ee;"></div>
<div style="position:absolute;left:468.7px;top:635.4px;width:4.4px;height:115.1px;background:#0000ee;"></div>
<div style="position:absolute;left:514.8px;top:635.4px;width:4.4px;height:115.1px;background:#0000ee;"></div>
<div style="position:absolute;left:539.1px;top:635.4px;width:4.4px;height:115.1px;background:#0000ee;"></div>
<div style="position:absolute;left:625px;top:635.4px;width:4.4px;height:115.1px;background:#0000ee;"></div>
<div style="position:absolute;left:732.6px;top:635.4px;width:4.4px;height:115.1px;background:#0000ee;"></div>
<div style="position:absolute;left:831.7px;top:635.4px;width:4.4px;height:115.1px;background:#0000ee;"></div>
<div style="position:absolute;left:860.1px;top:635.4px;width:4.4px;height:115.1px;background:#0000ee;"></div>
<div style="position:absolute;left:904.2px;top:635.4px;width:4.4px;height:115.1px;background:#0000ee;"></div>
<div style="position:absolute;left:939.6px;top:635.4px;width:4.4px;height:115.1px;background:#0000ee;"></div>
<div style="position:absolute;left:999px;top:635.4px;width:4.4px;height:115.1px;background:#0000ee;"></div>
<div style="position:absolute;left:1012.3px;top:635.4px;width:4.4px;height:115.1px;background:#0000ee;"></div>
<div style="position:absolute;left:1071.2px;top:635.4px;width:4.4px;height:115.1px;background:#0000ee;"></div>
<div style="position:absolute;left:1097.7px;top:635.4px;width:4.4px;height:115.1px;background:#0000ee;"></div>
<div style="position:absolute;left:1141.8px;top:635.4px;width:4.4px;height:115.1px;background:#0000ee;"></div>
<div style="position:absolute;left:1191px;top:635.4px;width:1px;height:115.1px;background:#6a8ad0;"></div>
<div style="position:absolute;left:52px;top:750.5px;width:1140px;height:34.9px;background:#6a6a6a;"></div>
<svg style="left:60px;top:760.5px;" width="15" height="15" viewBox="0 0 15 15"><path d="M2 2 L13 13 M13 2 L2 13" stroke="#c2dfe0" stroke-width="4.2" stroke-linecap="round"/></svg>
<svg style="left:87px;top:765.8px;" width="19.5" height="4.4" viewBox="0 0 19.5 4.4"><rect x="0" y="0" width="19.5" height="4.4" rx="1" fill="#c2dfe0"/></svg>
<svg style="left:118px;top:758.5px;" width="19" height="19" viewBox="0 0 19 19"><path d="M1.5 7.5 V1.5 H7.5 M11.5 1.5 H17.5 V7.5 M17.5 11.5 V17.5 H11.5 M7.5 17.5 H1.5 V11.5" fill="none" stroke="#c2dfe0" stroke-width="3"/></svg>
<div style="position:absolute;left:156px;top:769.2px;font-size:23px;color:#d5f3f3;white-space:pre;line-height:0;letter-spacing:0.55px;">lip sync</div>
<svg style="left:1170.5px;top:757.5px;" width="17" height="22" viewBox="0 0 17 22"><path d="M1.5 0 H15.5 V3.8 H12.8 L13.6 9.5 L17 13 V15.5 H10 L9 21.5 H8 L7 15.5 H0 V13 L3.4 9.5 L4.2 3.8 H1.5 Z" fill="#c8c8c8"/></svg>
<div style="position:absolute;left:52px;top:785.4px;width:1140px;height:114.8px;background:#ffffff;"></div>
<div style="position:absolute;left:52px;top:785.4px;width:43px;height:114.8px;background:#d4d4d4;"></div>
<div style="position:absolute;left:95px;top:785.4px;width:1.5px;height:114.8px;background:#2ed8a0;"></div>
<div style="position:absolute;left:95px;top:785.4px;width:1.5px;height:3px;background:#ff5050;"></div>
<div style="position:absolute;left:102.9px;width:1000px;text-align:center;top:844.3px;font-size:21.5px;color:#111;white-space:pre;line-height:0;letter-spacing:0.4px;">phonetic</div>
<div style="position:absolute;left:651.4px;width:1000px;text-align:center;top:844.3px;font-size:21.5px;color:#111;white-space:pre;line-height:0;letter-spacing:0.4px;">...</div>
<div style="position:absolute;left:1108.6px;top:785.4px;width:4.4px;height:114.8px;background:#0000ee;"></div>
<div style="position:absolute;left:1191px;top:785.4px;width:1px;height:114.8px;background:#6a8ad0;"></div>
<div style="position:absolute;left:52px;top:900.2px;width:1140px;height:35px;background:#6a6a6a;"></div>
<svg style="left:60px;top:910.2px;" width="15" height="15" viewBox="0 0 15 15"><path d="M2 2 L13 13 M13 2 L2 13" stroke="#c2dfe0" stroke-width="4.2" stroke-linecap="round"/></svg>
<svg style="left:87px;top:915.5px;" width="19.5" height="4.4" viewBox="0 0 19.5 4.4"><rect x="0" y="0" width="19.5" height="4.4" rx="1" fill="#c2dfe0"/></svg>
<svg style="left:118px;top:908.2px;" width="19" height="19" viewBox="0 0 19 19"><path d="M1.5 7.5 V1.5 H7.5 M11.5 1.5 H17.5 V7.5 M17.5 11.5 V17.5 H11.5 M7.5 17.5 H1.5 V11.5" fill="none" stroke="#c2dfe0" stroke-width="3"/></svg>
<div style="position:absolute;left:156px;top:919px;font-size:23px;color:#d5f3f3;white-space:pre;line-height:0;letter-spacing:0.55px;">behavior mode</div>
<svg style="left:1170.5px;top:907.2px;" width="17" height="22" viewBox="0 0 17 22"><path d="M1.5 0 H15.5 V3.8 H12.8 L13.6 9.5 L17 13 V15.5 H10 L9 21.5 H8 L7 15.5 H0 V13 L3.4 9.5 L4.2 3.8 H1.5 Z" fill="#c8c8c8"/></svg>
<div style="position:absolute;left:52px;top:935.2px;width:1140px;height:115px;background:#ffffff;"></div>
<div style="position:absolute;left:52px;top:935.2px;width:43px;height:115px;background:#d4d4d4;"></div>
<div style="position:absolute;left:95px;top:935.2px;width:1.5px;height:115px;background:#2ed8a0;"></div>
<div style="position:absolute;left:95px;top:935.2px;width:1.5px;height:3px;background:#ff5050;"></div>
<div style="position:absolute;left:-35.5px;width:1000px;text-align:center;top:994.2px;font-size:21.5px;color:#ee1010;white-space:pre;line-height:0;letter-spacing:0.4px;">positive</div>
<div style="position:absolute;left:513px;width:1000px;text-align:center;top:994.2px;font-size:21.5px;color:#111;white-space:pre;line-height:0;letter-spacing:0.4px;">negative</div>
<div style="position:absolute;left:831.8px;top:935.2px;width:4.4px;height:115px;background:#0000ee;"></div>
<div style="position:absolute;left:1191px;top:935.2px;width:1px;height:115px;background:#6a8ad0;"></div>
<div style="position:absolute;left:52px;top:1050.2px;width:1140px;height:35.1px;background:#6a6a6a;"></div>
<svg style="left:60px;top:1060.2px;" width="15" height="15" viewBox="0 0 15 15"><path d="M2 2 L13 13 M13 2 L2 13" stroke="#c2dfe0" stroke-width="4.2" stroke-linecap="round"/></svg>
<svg style="left:87px;top:1065.5px;" width="19.5" height="4.4" viewBox="0 0 19.5 4.4"><rect x="0" y="0" width="19.5" height="4.4" rx="1" fill="#c2dfe0"/></svg>
<svg style="left:118px;top:1058.2px;" width="19" height="19" viewBox="0 0 19 19"><path d="M1.5 7.5 V1.5 H7.5 M11.5 1.5 H17.5 V7.5 M17.5 11.5 V17.5 H11.5 M7.5 17.5 H1.5 V11.5" fill="none" stroke="#c2dfe0" stroke-width="3"/></svg>
<div style="position:absolute;left:156px;top:1069px;font-size:23px;color:#d5f3f3;white-space:pre;line-height:0;letter-spacing:0.55px;">expressions</div>
<svg style="left:1170.5px;top:1057.2px;" width="17" height="22" viewBox="0 0 17 22"><path d="M1.5 0 H15.5 V3.8 H12.8 L13.6 9.5 L17 13 V15.5 H10 L9 21.5 H8 L7 15.5 H0 V13 L3.4 9.5 L4.2 3.8 H1.5 Z" fill="#c8c8c8"/></svg>
<div style="position:absolute;left:52px;top:1085.3px;width:1140px;height:114.2px;background:#ffffff;"></div>
<div style="position:absolute;left:52px;top:1085.3px;width:43px;height:114.2px;background:#d4d4d4;"></div>
<div style="position:absolute;left:95px;top:1085.3px;width:1.5px;height:114.2px;background:#2ed8a0;"></div>
<div style="position:absolute;left:95px;top:1085.3px;width:1.5px;height:3px;background:#ff5050;"></div>
<div style="position:absolute;left:-346.9px;width:1000px;text-align:center;top:1143.9px;font-size:21.5px;color:#111;white-space:pre;line-height:0;letter-spacing:0.4px;">^</div>
<div style="position:absolute;left:-136.3px;width:1000px;text-align:center;top:1143.9px;font-size:21.5px;color:#111;white-space:pre;line-height:0;letter-spacing:0.4px;">/positive/high/1</div>
<div style="position:absolute;left:125.3px;width:1000px;text-align:center;top:1143.9px;font-size:21.5px;color:#111;white-space:pre;line-height:0;letter-spacing:0.4px;">/positive/low/3</div>
<div style="position:absolute;left:283.9px;width:1000px;text-align:center;top:1143.9px;font-size:21.5px;color:#111;white-space:pre;line-height:0;letter-spacing:0.4px;">...</div>
<div style="position:absolute;left:488.8px;width:1000px;text-align:center;top:1143.9px;font-size:21.5px;color:#111;white-space:pre;line-height:0;letter-spacing:0.4px;">/negative/high/5</div>
<div style="position:absolute;left:668px;width:1000px;text-align:center;top:1143.9px;font-size:21.5px;color:#111;white-space:pre;line-height:0;letter-spacing:0.4px;">^</div>
<div style="position:absolute;left:208.9px;top:1085.3px;width:4.4px;height:114.2px;background:#0000ee;"></div>
<div style="position:absolute;left:514.1px;top:1085.3px;width:4.4px;height:114.2px;background:#0000ee;"></div>
<div style="position:absolute;left:732.1px;top:1085.3px;width:4.4px;height:114.2px;background:#0000ee;"></div>
<div style="position:absolute;left:831.3px;top:1085.3px;width:4.4px;height:114.2px;background:#0000ee;"></div>
<div style="position:absolute;left:1141.9px;top:1085.3px;width:4.4px;height:114.2px;background:#0000ee;"></div>
<div style="position:absolute;left:1191px;top:1085.3px;width:1px;height:114.2px;background:#6a8ad0;"></div>
<div style="position:absolute;left:52px;top:1199.5px;width:1140px;height:35.8px;background:#6a6a6a;"></div>
<svg style="left:60px;top:1209.9px;" width="15" height="15" viewBox="0 0 15 15"><path d="M2 2 L13 13 M13 2 L2 13" stroke="#c2dfe0" stroke-width="4.2" stroke-linecap="round"/></svg>
<svg style="left:87px;top:1215.2px;" width="19.5" height="4.4" viewBox="0 0 19.5 4.4"><rect x="0" y="0" width="19.5" height="4.4" rx="1" fill="#c2dfe0"/></svg>
<svg style="left:118px;top:1207.9px;" width="19" height="19" viewBox="0 0 19 19"><path d="M1.5 7.5 V1.5 H7.5 M11.5 1.5 H17.5 V7.5 M17.5 11.5 V17.5 H11.5 M7.5 17.5 H1.5 V11.5" fill="none" stroke="#c2dfe0" stroke-width="3"/></svg>
<div style="position:absolute;left:156px;top:1218.7px;font-size:23px;color:#d5f3f3;white-space:pre;line-height:0;letter-spacing:0.55px;">modifiers</div>
<svg style="left:1170.5px;top:1206.5px;" width="17" height="22" viewBox="0 0 17 22"><path d="M1.5 0 H15.5 V3.8 H12.8 L13.6 9.5 L17 13 V15.5 H10 L9 21.5 H8 L7 15.5 H0 V13 L3.4 9.5 L4.2 3.8 H1.5 Z" fill="#c8c8c8"/></svg>
<div style="position:absolute;left:52px;top:1235.3px;width:1140px;height:229.9px;background:#fff;"></div>
<div style="position:absolute;left:52px;top:1235.3px;width:43px;height:229.9px;background:#d4d4d4;"></div>
<div style="position:absolute;left:95px;top:1245.6px;width:1097px;height:2px;background:#e6e6e6;"></div>
<div style="position:absolute;left:91px;top:1246px;width:4px;height:1.2px;background:#888;"></div>
<div style="position:absolute;left:-912px;width:1000px;text-align:right;top:1246.8px;font-size:19.5px;color:#111;white-space:pre;line-height:0;letter-spacing:0.3px;">2</div>
<div style="position:absolute;left:95px;top:1297.3px;width:1097px;height:2px;background:#e6e6e6;"></div>
<div style="position:absolute;left:91px;top:1297.7px;width:4px;height:1.2px;background:#888;"></div>
<div style="position:absolute;left:-912px;width:1000px;text-align:right;top:1298.5px;font-size:19.5px;color:#111;white-space:pre;line-height:0;letter-spacing:0.3px;">1.5</div>
<div style="position:absolute;left:95px;top:1349.4px;width:1097px;height:2px;background:#e6e6e6;"></div>
<div style="position:absolute;left:91px;top:1349.8px;width:4px;height:1.2px;background:#888;"></div>
<div style="position:absolute;left:-912px;width:1000px;text-align:right;top:1350.6px;font-size:19.5px;color:#111;white-space:pre;line-height:0;letter-spacing:0.3px;">1</div>
<div style="position:absolute;left:95px;top:1401.9px;width:1097px;height:2px;background:#e6e6e6;"></div>
<div style="position:absolute;left:91px;top:1402.3px;width:4px;height:1.2px;background:#888;"></div>
<div style="position:absolute;left:-912px;width:1000px;text-align:right;top:1403.1px;font-size:19.5px;color:#111;white-space:pre;line-height:0;letter-spacing:0.3px;">0.5</div>
<div style="position:absolute;left:95px;top:1453.5px;width:1097px;height:2px;background:#e6e6e6;"></div>
<div style="position:absolute;left:91px;top:1453.9px;width:4px;height:1.2px;background:#888;"></div>
<div style="position:absolute;left:-912px;width:1000px;text-align:right;top:1454.7px;font-size:19.5px;color:#111;white-space:pre;line-height:0;letter-spacing:0.3px;">0</div>
<div style="position:absolute;left:95px;top:1328.1px;width:1097px;height:2.6px;background:#141428;"></div>
<div style="position:absolute;left:95px;top:1349.1px;width:1097px;height:2.6px;background:#8a5a50;"></div>
<div style="position:absolute;left:95px;top:1453px;width:1097px;height:3px;background:#f020c0;"></div>
<div style="position:absolute;left:95px;top:1235.3px;width:1.6px;height:229.9px;background:#2ed8a0;"></div>
<div style="position:absolute;left:52px;top:1465.2px;width:1161px;height:1.8px;background:#3a3a3a;"></div>
<div style="position:absolute;left:52px;top:1467px;width:1161px;height:1.3px;background:#f4f4f4;"></div>
<div style="position:absolute;left:52px;top:1468.3px;width:1161px;height:35.3px;background:#6a6a6a;border-top:1.5px solid #3e3e3e;border-bottom:1px solid #4a4a4a;"></div>
<div style="position:absolute;left:94px;top:1468.3px;width:2.5px;height:35.3px;background:#454545;"></div>
<div style="position:absolute;left:1191px;top:1468.3px;width:2.5px;height:35.3px;background:#454545;"></div>
<div style="position:absolute;left:602px;top:1486.8px;font-size:20.5px;color:#111;white-space:pre;line-height:0;letter-spacing:0.6px;">4.987</div>
<svg style="left:661.5px;top:1470.9px;" width="24.5" height="29.5" viewBox="0 0 24.5 29.5"><path d="M2 1.5 Q0.5 0.5 0.5 3 V26.5 Q0.5 29.0 2 28.0 L23.5 16.25 Q24.5 14.75 23.5 13.25 Z" fill="#000"/></svg>
<div style="position:absolute;left:52px;top:1503.6px;width:1161px;height:30.4px;background:#efefef;"></div>
<div style="position:absolute;left:67px;top:1519.6px;font-size:20.5px;color:#111;white-space:pre;line-height:0;letter-spacing:0.6px;">0.000</div>
<div style="position:absolute;left:92.5px;top:1508.6px;width:2px;height:20.4px;background:#f06060;"></div>
<div style="position:absolute;left:52px;top:1503.6px;width:1161px;height:30.4px;overflow:hidden">
<div style="position:absolute;left:1112px;top:16px;font-size:20.5px;color:#111;white-space:pre;line-height:0;letter-spacing:0.6px">4.987</div>
</div>
<div style="position:absolute;left:52px;top:1534px;width:1161px;height:35.6px;background:#6a6a6a;border-top:1.5px solid #3e3e3e;border-bottom:1px solid #4a4a4a;"></div>
<div style="position:absolute;left:94px;top:1534px;width:2.5px;height:35.6px;background:#454545;"></div>
<div style="position:absolute;left:1191px;top:1534px;width:2.5px;height:35.6px;background:#454545;"></div>
<div style="position:absolute;left:602px;top:1552.6px;font-size:20.5px;color:#111;white-space:pre;line-height:0;letter-spacing:0.6px;">4.987</div>
<svg style="left:661.5px;top:1536.8px;" width="24.5" height="29.5" viewBox="0 0 24.5 29.5"><path d="M2 1.5 Q0.5 0.5 0.5 3 V26.5 Q0.5 29.0 2 28.0 L23.5 16.25 Q24.5 14.75 23.5 13.25 Z" fill="#000"/></svg>
<div style="position:absolute;left:52px;top:1569.6px;width:1161px;height:65.4px;background:#efefef;"></div>
<div style="position:absolute;left:56px;top:1578px;width:1154px;height:15px;background:#adadad;border-radius:8px;"></div>
<div style="position:absolute;left:55px;top:1616.2px;font-size:21px;color:#111;white-space:pre;line-height:0;letter-spacing:0.1px;">Current Time (s)</div>
<div style="position:absolute;left:212.8px;top:1596px;width:79.5px;height:37px;background:#fff;"></div>
<div style="position:absolute;left:217.3px;top:1616.3px;font-size:20.5px;color:#111;white-space:pre;line-height:0;letter-spacing:0.6px;">0.000 s</div>
<div style="position:absolute;left:536.3px;top:1596px;width:37.7px;height:37.6px;background:#6a6a6a;"></div>
<svg style="left:536.3px;top:1596px;" width="37.7" height="37.6" viewBox="0 0 37.7 37.6"><g fill="#000"><g transform="translate(5.350000000000023,6.599999999999955)"><rect x="0" y="0" width="4" height="21"/><path d="M4.5 10.5 L12.8 1 V20 Z M13.5 10.5 L22.5 1 V20 Z" stroke="#000" stroke-width="2" stroke-linejoin="round"/></g></g></svg>
<div style="position:absolute;left:576.9px;top:1596px;width:34.1px;height:37.6px;background:#6a6a6a;"></div>
<svg style="left:576.9px;top:1596px;" width="34.1" height="37.6" viewBox="0 0 34.1 37.6"><g fill="#000"><path d="M5.550000000000011 4.7999999999999545 V32.299999999999955 L29.55000000000001 18.599999999999955 Z" stroke="#000" stroke-width="2.6" stroke-linejoin="round"/></g></svg>
<div style="position:absolute;left:614px;top:1596px;width:34px;height:37.6px;background:#6a6a6a;"></div>
<svg style="left:614px;top:1596px;" width="34" height="37.6" viewBox="0 0 34 37.6"><g fill="#000"><rect x="4.800000000000001" y="5.2999999999999545" width="24.6" height="24.6" rx="3.5"/></g></svg>
<div style="position:absolute;left:651px;top:1596px;width:36.8px;height:37.6px;background:#6a6a6a;"></div>
<svg style="left:651px;top:1596px;" width="36.8" height="37.6" viewBox="0 0 36.8 37.6"><g fill="#000"><g transform="translate(4.899999999999977,6.599999999999955)"><path d="M1 1 L9.5 10.5 L1 20 Z M10 1 L18.5 10.5 L10 20 Z" stroke="#000" stroke-width="2" stroke-linejoin="round"/><rect x="23" y="0" width="4" height="21"/></g></g></svg>
<div style="position:absolute;left:691px;top:1596px;width:37.3px;height:37.6px;background:#6a6a6a;"></div>
<svg style="left:691px;top:1596px;" width="37.3" height="37.6" viewBox="0 0 37.3 37.6"><g fill="#000"><path d="M25.78 9.37 A11.5 11.5 0 1 0 25.35 26.05" fill="none" stroke="#e6e6e6" stroke-width="4.3" stroke-linecap="round"/><path d="M28.15 3.30 H31.95 V16.00 H19.55 V12.10 H28.15 Z" fill="#e6e6e6" stroke="#e6e6e6" stroke-width="1" stroke-linejoin="round"/></g></svg>
<div style="position:absolute;left:1016px;top:1596px;width:41.6px;height:37.6px;background:#6a6a6a;"></div>
<svg style="left:1016px;top:1596px;" width="41.6" height="37.6" viewBox="0 0 41.6 37.6"><circle cx="17.799999999999955" cy="14.599999999999955" r="9.3" fill="none" stroke="#000" stroke-width="4.3"/><path d="M24.299999999999955 21.099999999999955 L31.799999999999955 28.599999999999955" stroke="#000" stroke-width="4.5" stroke-linecap="round"/><path d="M12.599999999999955 14.599999999999955 H22.999999999999954 M17.799999999999955 9.399999999999956 V19.799999999999955" stroke="#000" stroke-width="3.2"/></svg>
<div style="position:absolute;left:1060px;top:1596px;width:41px;height:37.6px;background:#6a6a6a;"></div>
<svg style="left:1060px;top:1596px;" width="41" height="37.6" viewBox="0 0 41 37.6"><circle cx="17.5" cy="14.599999999999955" r="9.3" fill="none" stroke="#000" stroke-width="4.3"/><path d="M24.0 21.099999999999955 L31.5 28.599999999999955" stroke="#000" stroke-width="4.5" stroke-linecap="round"/><path d="M12.0 14.599999999999955 H23.0" stroke="#000" stroke-width="3.2"/></svg>
<div style="position:absolute;left:1104px;top:1596px;width:43.6px;height:37.6px;background:#6a6a6a;"></div>
<svg style="left:1104px;top:1596px;" width="43.6" height="37.6" viewBox="0 0 43.6 37.6"><circle cx="18.799999999999955" cy="14.599999999999955" r="9.3" fill="none" stroke="#000" stroke-width="4.3"/><path d="M25.299999999999955 21.099999999999955 L32.799999999999955 28.599999999999955" stroke="#000" stroke-width="4.5" stroke-linecap="round"/><path d="M4.2999999999999545 10.599999999999955 V31.099999999999955 M38.299999999999955 10.599999999999955 V31.099999999999955" stroke="#000" stroke-width="1.3"/></svg>
<div style="position:absolute;left:1150px;top:1596px;width:41.7px;height:37.6px;background:#6a6a6a;"></div>
<svg style="left:1150px;top:1596px;" width="41.7" height="37.6" viewBox="0 0 41.7 37.6"><circle cx="17.850000000000023" cy="14.599999999999955" r="9.3" fill="none" stroke="#000" stroke-width="4.3"/><path d="M24.350000000000023 21.099999999999955 L31.850000000000023 28.599999999999955" stroke="#000" stroke-width="4.5" stroke-linecap="round"/></svg>
<div style="position:absolute;left:51px;top:164px;width:1px;height:1472px;background:#2a2a2a;"></div>
</div></div>
<div style="position:absolute;left:0;top:0;width:3755px;height:1733px">
<div style="position:absolute;left:1244px;top:244.4px;font-size:17.5px;color:#ffffff;white-space:pre;line-height:0;font-weight:bold;">Character</div>
<div style="position:absolute;left:1244px;top:270px;width:475.6px;height:285.7px;background:#434343;border:1px solid #2c2c2c;border-right-color:#555;border-bottom-color:#555;"></div>
<div style="position:absolute;left:1246.5px;top:273px;width:149px;height:34.3px;background:#333638;border:1px solid #2a2a2a;border-right-color:#4a4a4a;border-bottom-color:#222;"></div>
<div style="position:absolute;left:1397px;top:273px;width:320px;height:34.3px;background:#333638;border:1px solid #2a2a2a;border-right-color:#4a4a4a;border-bottom-color:#222;"></div>
<div style="position:absolute;left:1247px;top:357px;width:470.8px;height:23.7px;background:#45a89c;"></div>
<div style="position:absolute;left:1251.5px;top:322.2px;font-size:17px;color:#f2f2f2;white-space:pre;line-height:0;">Sakura</div>
<div style="position:absolute;left:1401.3px;top:322.2px;font-size:16.8px;color:#f2f2f2;white-space:pre;line-height:0;">C:/Users/berge/SG_DEV/SG_Characte...</div>
<div style="position:absolute;left:1251.5px;top:346.2px;font-size:17px;color:#f2f2f2;white-space:pre;line-height:0;">Vivian</div>
<div style="position:absolute;left:1401.3px;top:346.3px;font-size:16.8px;color:#f2f2f2;white-space:pre;line-height:0;">C:/Users/berge/SG_DEV/SG_Characte...</div>
<div style="position:absolute;left:1251.5px;top:370.1px;font-size:17px;color:#101010;white-space:pre;line-height:0;">Ada</div>
<div style="position:absolute;left:1401.3px;top:370.1px;font-size:16.8px;color:#101010;white-space:pre;line-height:0;">C:/Users/berge/SG_DEV/SG_Characte...</div>
<div style="position:absolute;left:1622px;top:567px;width:43px;height:43.5px;background:#434343;border-right:1.5px solid #2a2a2a;border-bottom:1.5px solid #2a2a2a;border-top:1px solid #505050;border-left:1px solid #505050;"></div>
<div style="position:absolute;left:1143.5px;width:1000px;text-align:center;top:588.7px;font-size:18px;color:#f0f0f0;white-space:pre;line-height:0;">+</div>
<div style="position:absolute;left:1675.6px;top:567px;width:44px;height:43.5px;background:#434343;border-right:1.5px solid #2a2a2a;border-bottom:1.5px solid #2a2a2a;border-top:1px solid #505050;border-left:1px solid #505050;"></div>
<div style="position:absolute;left:1197.6px;width:1000px;text-align:center;top:588.7px;font-size:18px;color:#f0f0f0;white-space:pre;line-height:0;">−</div>
<div style="position:absolute;left:1244px;top:647.1px;font-size:17.5px;color:#ffffff;white-space:pre;line-height:0;font-weight:bold;">Language</div>
<div style="position:absolute;left:1244px;top:672.3px;width:475.6px;height:29.7px;background:#424242;border-top:1.5px solid #262626;border-left:1.5px solid #262626;border-bottom:1px solid #4c4c4c;border-right:1px solid #4c4c4c;"></div>
<div style="position:absolute;left:1693px;top:675.3px;width:24.6px;height:24.7px;background:#424242;border-left:1px solid #2a2a2a;border-bottom:1.5px solid #222;border-top:1px solid #555;border-right:1px solid #555;"></div>
<svg style="left:1699.8px;top:683.1px;" width="13" height="8" viewBox="0 0 13 8"><path d="M0 0 H13 L6.5 7.5 Z" fill="#ffffff"/></svg>
<div style="position:absolute;left:1251px;top:687.8px;font-size:16.2px;color:#f2f2f2;white-space:pre;line-height:0;">English_GB-EAW_1.1</div>
<div style="position:absolute;left:1244px;top:739.4px;font-size:17.5px;color:#ffffff;white-space:pre;line-height:0;font-weight:bold;">Behaviour</div>
<div style="position:absolute;left:1244px;top:781.9px;font-size:17.5px;color:#f2f2f2;white-space:pre;line-height:0;">General Mode</div>
<div style="position:absolute;left:1604.6px;top:766px;width:113.9px;height:30px;background:#424242;border-top:1.5px solid #262626;border-left:1.5px solid #262626;border-bottom:1px solid #4c4c4c;border-right:1px solid #4c4c4c;"></div>
<div style="position:absolute;left:1693px;top:769px;width:23.5px;height:25px;background:#424242;border-left:1px solid #2a2a2a;border-bottom:1.5px solid #222;border-top:1px solid #555;border-right:1px solid #555;"></div>
<svg style="left:1699.2px;top:777px;" width="13" height="8" viewBox="0 0 13 8"><path d="M0 0 H13 L6.5 7.5 Z" fill="#ffffff"/></svg>
<div style="position:absolute;left:1611.6px;top:781.2px;font-size:17.5px;color:#f2f2f2;white-space:pre;line-height:0;">neutral</div>
<div style="position:absolute;left:1244px;top:820.1px;font-size:17.5px;color:#f2f2f2;white-space:pre;line-height:0;font-style:italic;text-decoration:underline;">Auto Modes</div>
<div style="position:absolute;left:1244px;top:856.5px;font-size:17.5px;color:#f2f2f2;white-space:pre;line-height:0;">Positive</div>
<div style="position:absolute;left:1566.3px;top:846.3px;width:19.5px;height:19.5px;background:transparent;border:1.6px solid #e4e4e4;border-right-color:#bdbdbd;border-bottom-color:#bdbdbd;"></div>
<svg style="left:1569.8px;top:850.8px;" width="13" height="11" viewBox="0 0 13 11"><path d="M1 5.5 L4.8 9.3 L12 1.5" fill="none" stroke="#ffffff" stroke-width="2.6"/></svg>
<div style="position:absolute;left:1604.6px;top:840.4px;width:113.9px;height:30px;background:#424242;border-top:1.5px solid #262626;border-left:1.5px solid #262626;border-bottom:1px solid #4c4c4c;border-right:1px solid #4c4c4c;"></div>
<div style="position:absolute;left:1693px;top:843.4px;width:23.5px;height:25px;background:#424242;border-left:1px solid #2a2a2a;border-bottom:1.5px solid #222;border-top:1px solid #555;border-right:1px solid #555;"></div>
<svg style="left:1699.2px;top:851.4px;" width="13" height="8" viewBox="0 0 13 8"><path d="M0 0 H13 L6.5 7.5 Z" fill="#ffffff"/></svg>
<div style="position:absolute;left:1611.6px;top:855.6px;font-size:17.5px;color:#f2f2f2;white-space:pre;line-height:0;">positive</div>
<div style="position:absolute;left:1244px;top:898.7px;font-size:17.5px;color:#f2f2f2;white-space:pre;line-height:0;">Negative</div>
<div style="position:absolute;left:1566.3px;top:888.5px;width:19.5px;height:19.5px;background:transparent;border:1.6px solid #e4e4e4;border-right-color:#bdbdbd;border-bottom-color:#bdbdbd;"></div>
<svg style="left:1569.8px;top:893px;" width="13" height="11" viewBox="0 0 13 11"><path d="M1 5.5 L4.8 9.3 L12 1.5" fill="none" stroke="#ffffff" stroke-width="2.6"/></svg>
<div style="position:absolute;left:1604.6px;top:882.6px;width:113.9px;height:30px;background:#424242;border-top:1.5px solid #262626;border-left:1.5px solid #262626;border-bottom:1px solid #4c4c4c;border-right:1px solid #4c4c4c;"></div>
<div style="position:absolute;left:1693px;top:885.6px;width:23.5px;height:25px;background:#424242;border-left:1px solid #2a2a2a;border-bottom:1.5px solid #222;border-top:1px solid #555;border-right:1px solid #555;"></div>
<svg style="left:1699.2px;top:893.6px;" width="13" height="8" viewBox="0 0 13 8"><path d="M0 0 H13 L6.5 7.5 Z" fill="#ffffff"/></svg>
<div style="position:absolute;left:1611.6px;top:897.8px;font-size:17.5px;color:#f2f2f2;white-space:pre;line-height:0;">negative</div>
<div style="position:absolute;left:1244px;top:940.8px;font-size:17.5px;color:#f2f2f2;white-space:pre;line-height:0;">Effort</div>
<div style="position:absolute;left:1566.3px;top:930.6px;width:19.5px;height:19.5px;background:transparent;border:1.6px solid #e4e4e4;border-right-color:#bdbdbd;border-bottom-color:#bdbdbd;"></div>
<div style="position:absolute;left:1604.6px;top:924.7px;width:113.9px;height:30px;background:#424242;border-top:1.5px solid #262626;border-left:1.5px solid #262626;border-bottom:1px solid #4c4c4c;border-right:1px solid #4c4c4c;"></div>
<div style="position:absolute;left:1693px;top:927.7px;width:23.5px;height:25px;background:#424242;border-left:1px solid #2a2a2a;border-bottom:1.5px solid #222;border-top:1px solid #555;border-right:1px solid #555;"></div>
<svg style="left:1699.2px;top:935.7px;" width="13" height="8" viewBox="0 0 13 8"><path d="M0 0 H13 L6.5 7.5 Z" fill="#ffffff"/></svg>
<div style="position:absolute;left:1611.6px;top:939.9px;font-size:17.5px;color:#f2f2f2;white-space:pre;line-height:0;">effort</div>
<div style="position:absolute;left:1244px;top:979.1px;font-size:17.5px;color:#f2f2f2;white-space:pre;line-height:0;font-style:italic;text-decoration:underline;">Modifiers</div>
<div style="position:absolute;left:1244px;top:1015.6px;font-size:17.5px;color:#f2f2f2;white-space:pre;line-height:0;">Speech Magnitude</div>
<div style="position:absolute;left:1604px;top:1000.4px;width:114.5px;height:30px;background:#424242;border-top:1.5px solid #262626;border-left:1.5px solid #262626;border-bottom:1px solid #4e4e4e;border-right:1px solid #4e4e4e;"></div>
<div style="position:absolute;left:1693.4px;top:1003.4px;width:21.1px;height:12px;background:#424242;border-left:1px solid #2a2a2a;border-top:1px solid #5a5a5a;border-bottom:1px solid #2a2a2a;"></div>
<div style="position:absolute;left:1693.4px;top:1015.4px;width:21.1px;height:12px;background:#424242;border-left:1px solid #2a2a2a;border-top:1px solid #5a5a5a;border-bottom:1.5px solid #222;"></div>
<svg style="left:1700.5px;top:1006.4px;" width="7" height="4" viewBox="0 0 7 4"><path d="M0 4 L3.5 0 L7 4Z" fill="#ffffff"/></svg>
<svg style="left:1700.5px;top:1020.4px;" width="7" height="4" viewBox="0 0 7 4"><path d="M0 0 L3.5 4 L7 0Z" fill="#ffffff"/></svg>
<div style="position:absolute;left:1611px;top:1015.6px;font-size:17.5px;color:#f2f2f2;white-space:pre;line-height:0;">1.00</div>
<div style="position:absolute;left:1244px;top:1057.6px;font-size:17.5px;color:#f2f2f2;white-space:pre;line-height:0;">Nonverbal Magnitude</div>
<div style="position:absolute;left:1604px;top:1042.5px;width:114.5px;height:30px;background:#424242;border-top:1.5px solid #262626;border-left:1.5px solid #262626;border-bottom:1px solid #4e4e4e;border-right:1px solid #4e4e4e;"></div>
<div style="position:absolute;left:1693.4px;top:1045.5px;width:21.1px;height:12px;background:#424242;border-left:1px solid #2a2a2a;border-top:1px solid #5a5a5a;border-bottom:1px solid #2a2a2a;"></div>
<div style="position:absolute;left:1693.4px;top:1057.5px;width:21.1px;height:12px;background:#424242;border-left:1px solid #2a2a2a;border-top:1px solid #5a5a5a;border-bottom:1.5px solid #222;"></div>
<svg style="left:1700.5px;top:1048.5px;" width="7" height="4" viewBox="0 0 7 4"><path d="M0 4 L3.5 0 L7 4Z" fill="#ffffff"/></svg>
<svg style="left:1700.5px;top:1062.5px;" width="7" height="4" viewBox="0 0 7 4"><path d="M0 0 L3.5 4 L7 0Z" fill="#ffffff"/></svg>
<div style="position:absolute;left:1611px;top:1057.6px;font-size:17.5px;color:#f2f2f2;white-space:pre;line-height:0;">1.00</div>
<div style="position:absolute;left:1244px;top:1099.7px;font-size:17.5px;color:#f2f2f2;white-space:pre;line-height:0;">Speech Speed</div>
<div style="position:absolute;left:1604px;top:1084.5px;width:114.5px;height:30px;background:#424242;border-top:1.5px solid #262626;border-left:1.5px solid #262626;border-bottom:1px solid #4e4e4e;border-right:1px solid #4e4e4e;"></div>
<div style="position:absolute;left:1693.4px;top:1087.5px;width:21.1px;height:12px;background:#424242;border-left:1px solid #2a2a2a;border-top:1px solid #5a5a5a;border-bottom:1px solid #2a2a2a;"></div>
<div style="position:absolute;left:1693.4px;top:1099.5px;width:21.1px;height:12px;background:#424242;border-left:1px solid #2a2a2a;border-top:1px solid #5a5a5a;border-bottom:1.5px solid #222;"></div>
<svg style="left:1700.5px;top:1090.5px;" width="7" height="4" viewBox="0 0 7 4"><path d="M0 4 L3.5 0 L7 4Z" fill="#ffffff"/></svg>
<svg style="left:1700.5px;top:1104.5px;" width="7" height="4" viewBox="0 0 7 4"><path d="M0 0 L3.5 4 L7 0Z" fill="#ffffff"/></svg>
<div style="position:absolute;left:1611px;top:1099.7px;font-size:17.5px;color:#f2f2f2;white-space:pre;line-height:0;">1.00</div>
<div style="position:absolute;left:1244px;top:1141.7px;font-size:17.5px;color:#f2f2f2;white-space:pre;line-height:0;">Nonverbal Speed</div>
<div style="position:absolute;left:1604px;top:1126.5px;width:114.5px;height:30px;background:#424242;border-top:1.5px solid #262626;border-left:1.5px solid #262626;border-bottom:1px solid #4e4e4e;border-right:1px solid #4e4e4e;"></div>
<div style="position:absolute;left:1693.4px;top:1129.5px;width:21.1px;height:12px;background:#424242;border-left:1px solid #2a2a2a;border-top:1px solid #5a5a5a;border-bottom:1px solid #2a2a2a;"></div>
<div style="position:absolute;left:1693.4px;top:1141.5px;width:21.1px;height:12px;background:#424242;border-left:1px solid #2a2a2a;border-top:1px solid #5a5a5a;border-bottom:1.5px solid #222;"></div>
<svg style="left:1700.5px;top:1132.5px;" width="7" height="4" viewBox="0 0 7 4"><path d="M0 4 L3.5 0 L7 4Z" fill="#ffffff"/></svg>
<svg style="left:1700.5px;top:1146.5px;" width="7" height="4" viewBox="0 0 7 4"><path d="M0 0 L3.5 4 L7 0Z" fill="#ffffff"/></svg>
<div style="position:absolute;left:1611px;top:1141.7px;font-size:17.5px;color:#f2f2f2;white-space:pre;line-height:0;">1.00</div>
<div style="position:absolute;left:1244px;top:1183.8px;font-size:17.5px;color:#f2f2f2;white-space:pre;line-height:0;">Hyperarticulation</div>
<div style="position:absolute;left:1604px;top:1168.6px;width:114.5px;height:30px;background:#424242;border-top:1.5px solid #262626;border-left:1.5px solid #262626;border-bottom:1px solid #4e4e4e;border-right:1px solid #4e4e4e;"></div>
<div style="position:absolute;left:1693.4px;top:1171.6px;width:21.1px;height:12px;background:#424242;border-left:1px solid #2a2a2a;border-top:1px solid #5a5a5a;border-bottom:1px solid #2a2a2a;"></div>
<div style="position:absolute;left:1693.4px;top:1183.6px;width:21.1px;height:12px;background:#424242;border-left:1px solid #2a2a2a;border-top:1px solid #5a5a5a;border-bottom:1.5px solid #222;"></div>
<svg style="left:1700.5px;top:1174.6px;" width="7" height="4" viewBox="0 0 7 4"><path d="M0 4 L3.5 0 L7 4Z" fill="#ffffff"/></svg>
<svg style="left:1700.5px;top:1188.6px;" width="7" height="4" viewBox="0 0 7 4"><path d="M0 0 L3.5 4 L7 0Z" fill="#ffffff"/></svg>
<div style="position:absolute;left:1611px;top:1183.8px;font-size:17.5px;color:#f2f2f2;white-space:pre;line-height:0;">0.00</div>
<div style="position:absolute;left:1244px;top:1225.8px;font-size:17.5px;color:#f2f2f2;white-space:pre;line-height:0;">Jaw Limit</div>
<div style="position:absolute;left:1604px;top:1210.7px;width:114.5px;height:30px;background:#424242;border-top:1.5px solid #262626;border-left:1.5px solid #262626;border-bottom:1px solid #4e4e4e;border-right:1px solid #4e4e4e;"></div>
<div style="position:absolute;left:1693.4px;top:1213.7px;width:21.1px;height:12px;background:#424242;border-left:1px solid #2a2a2a;border-top:1px solid #5a5a5a;border-bottom:1px solid #2a2a2a;"></div>
<div style="position:absolute;left:1693.4px;top:1225.7px;width:21.1px;height:12px;background:#424242;border-left:1px solid #2a2a2a;border-top:1px solid #5a5a5a;border-bottom:1.5px solid #222;"></div>
<svg style="left:1700.5px;top:1216.7px;" width="7" height="4" viewBox="0 0 7 4"><path d="M0 4 L3.5 0 L7 4Z" fill="#ffffff"/></svg>
<svg style="left:1700.5px;top:1230.7px;" width="7" height="4" viewBox="0 0 7 4"><path d="M0 0 L3.5 4 L7 0Z" fill="#ffffff"/></svg>
<div style="position:absolute;left:1611px;top:1225.8px;font-size:17.5px;color:#f2f2f2;white-space:pre;line-height:0;">1.00</div>
<div style="position:absolute;left:1244px;top:1267.9px;font-size:17.5px;color:#f2f2f2;white-space:pre;line-height:0;">Expression Frequency</div>
<div style="position:absolute;left:1604px;top:1252.7px;width:114.5px;height:30px;background:#555555;border-top:1.5px solid #262626;border-left:1.5px solid #262626;border-bottom:1px solid #4e4e4e;border-right:1px solid #4e4e4e;"></div>
<div style="position:absolute;left:1693.4px;top:1255.7px;width:21.1px;height:12px;background:#555555;border-left:1px solid #2a2a2a;border-top:1px solid #5a5a5a;border-bottom:1px solid #2a2a2a;"></div>
<div style="position:absolute;left:1693.4px;top:1267.7px;width:21.1px;height:12px;background:#555555;border-left:1px solid #2a2a2a;border-top:1px solid #5a5a5a;border-bottom:1.5px solid #222;"></div>
<svg style="left:1700.5px;top:1258.7px;" width="7" height="4" viewBox="0 0 7 4"><path d="M0 4 L3.5 0 L7 4Z" fill="#b0b0b0"/></svg>
<svg style="left:1700.5px;top:1272.7px;" width="7" height="4" viewBox="0 0 7 4"><path d="M0 0 L3.5 4 L7 0Z" fill="#b0b0b0"/></svg>
<div style="position:absolute;left:1611px;top:1267.9px;font-size:17.5px;color:#9a9a9a;white-space:pre;line-height:0;">1.00</div>
<div style="position:absolute;left:1244px;top:1309.9px;font-size:17.5px;color:#f2f2f2;white-space:pre;line-height:0;">Blink Frequency</div>
<div style="position:absolute;left:1604px;top:1294.8px;width:114.5px;height:30px;background:#424242;border-top:1.5px solid #262626;border-left:1.5px solid #262626;border-bottom:1px solid #4e4e4e;border-right:1px solid #4e4e4e;"></div>
<div style="position:absolute;left:1693.4px;top:1297.8px;width:21.1px;height:12px;background:#424242;border-left:1px solid #2a2a2a;border-top:1px solid #5a5a5a;border-bottom:1px solid #2a2a2a;"></div>
<div style="position:absolute;left:1693.4px;top:1309.8px;width:21.1px;height:12px;background:#424242;border-left:1px solid #2a2a2a;border-top:1px solid #5a5a5a;border-bottom:1.5px solid #222;"></div>
<svg style="left:1700.5px;top:1300.8px;" width="7" height="4" viewBox="0 0 7 4"><path d="M0 4 L3.5 0 L7 4Z" fill="#ffffff"/></svg>
<svg style="left:1700.5px;top:1314.8px;" width="7" height="4" viewBox="0 0 7 4"><path d="M0 0 L3.5 4 L7 0Z" fill="#ffffff"/></svg>
<div style="position:absolute;left:1611px;top:1309.9px;font-size:17.5px;color:#f2f2f2;white-space:pre;line-height:0;">1.00</div>
<div style="position:absolute;left:1244px;top:1352px;font-size:17.5px;color:#f2f2f2;white-space:pre;line-height:0;">Dart Frequency</div>
<div style="position:absolute;left:1604px;top:1336.8px;width:114.5px;height:30px;background:#424242;border-top:1.5px solid #262626;border-left:1.5px solid #262626;border-bottom:1px solid #4e4e4e;border-right:1px solid #4e4e4e;"></div>
<div style="position:absolute;left:1693.4px;top:1339.8px;width:21.1px;height:12px;background:#424242;border-left:1px solid #2a2a2a;border-top:1px solid #5a5a5a;border-bottom:1px solid #2a2a2a;"></div>
<div style="position:absolute;left:1693.4px;top:1351.8px;width:21.1px;height:12px;background:#424242;border-left:1px solid #2a2a2a;border-top:1px solid #5a5a5a;border-bottom:1.5px solid #222;"></div>
<svg style="left:1700.5px;top:1342.8px;" width="7" height="4" viewBox="0 0 7 4"><path d="M0 4 L3.5 0 L7 4Z" fill="#ffffff"/></svg>
<svg style="left:1700.5px;top:1356.8px;" width="7" height="4" viewBox="0 0 7 4"><path d="M0 0 L3.5 4 L7 0Z" fill="#ffffff"/></svg>
<div style="position:absolute;left:1611px;top:1352px;font-size:17.5px;color:#f2f2f2;white-space:pre;line-height:0;">1.00</div>
</div>
<div style="position:absolute;left:1861px;top:93px;width:1191px;height:1550px;border-radius:8px;box-shadow:0 14px 34px rgba(0,25,30,0.40), 0 0 0 1px rgba(110,150,150,0.45);background:#434343"></div>
<div style="position:absolute;left:1861px;top:93px;width:1191px;height:1550px;border-radius:8px;overflow:hidden">
<div style="position:absolute;left:-1861px;top:-93px;width:3755px;height:1733px">
<div style="position:absolute;left:1861px;top:93px;width:1191px;height:43px;background:#f3f3f3;border-radius:8px 8px 0 0;"></div>
<svg style="left:1872px;top:101px;" width="24" height="24" viewBox="0 0 24 24"><defs><linearGradient id="ig1872" x1="0" y1="0" x2="0" y2="1"><stop offset="0" stop-color="#2a2f31"/><stop offset="0.45" stop-color="#0c0e0e"/><stop offset="1" stop-color="#060707"/></linearGradient></defs><rect x="0" y="0" width="24" height="24" rx="4.5" fill="url(#ig1872)"/><path d="M1 8.5 C4 3.5, 8 3.5, 11 10 S17 21, 23 15" fill="none" stroke="#3fd483" stroke-width="1.4"/></svg>
<div style="position:absolute;left:1901.5px;top:113.9px;font-size:17.5px;color:#8a8a8a;white-space:pre;line-height:0;">Tyger_short</div>
<svg style="left:3009px;top:105.5px;" width="16" height="16" viewBox="0 0 16 16"><path d="M0.5 0.5 L15.5 15.5 M15.5 0.5 L0.5 15.5" stroke="#8a8a8a" stroke-width="1.3"/></svg>
<svg style="left:2938.5px;top:106px;" width="15" height="15" viewBox="0 0 15 15"><rect x="0.6" y="0.6" width="13.8" height="13.8" rx="2" fill="none" stroke="#8a8a8a" stroke-width="1.3"/></svg>
<svg style="left:2869.5px;top:112.2px;" width="15" height="2" viewBox="0 0 15 2"><path d="M0 0.6 L15 0.6" stroke="#8a8a8a" stroke-width="1.3"/></svg>
<div style="position:absolute;left:1861px;top:136px;width:1191px;height:41px;background:#333638;"></div>
<div style="position:absolute;left:2043px;top:141px;width:151px;height:36px;background:#42a99d;"></div>
<div style="position:absolute;left:1861px;top:177px;width:1191px;height:2.3px;background:#40c0b4;"></div>
<div style="position:absolute;left:1861px;top:179.3px;width:1191px;height:1.7px;background:#2e2e2e;"></div>
<div style="position:absolute;left:2192px;top:141.3px;width:1.2px;height:31.4px;background:#aaaaaa;"></div>
<div style="position:absolute;left:1879.9px;top:159.9px;font-size:17px;color:#ffffff;white-space:pre;line-height:0;">Tyger_short*</div>
<svg style="left:1994.2px;top:149.8px;" width="14.5" height="14.5" viewBox="0 0 14.5 14.5"><path d="M1.3 1.3 L13.2 13.2 M13.2 1.3 L1.3 13.2" stroke="#f6f6f6" stroke-width="3.7" stroke-linecap="round"/></svg>
<div style="position:absolute;left:2059.5px;top:159.2px;font-size:17.5px;color:#0c1c1c;white-space:pre;line-height:0;">p364_025</div>
<svg style="left:2152.8px;top:148.4px;" width="14.5" height="14.5" viewBox="0 0 14.5 14.5"><path d="M1.3 1.3 L13.2 13.2 M13.2 1.3 L1.3 13.2" stroke="#f6f6f6" stroke-width="3.7" stroke-linecap="round"/></svg>
<div style="position:absolute;left:3030px;top:181px;width:21px;height:1287px;background:#d6d6d6;"></div>
<div style="position:absolute;left:1862px;top:181px;width:1168px;height:35.8px;background:#8a8a8a;"></div>
<svg style="left:1870px;top:191.4px;" width="15" height="15" viewBox="0 0 15 15"><path d="M2 2 L13 13 M13 2 L2 13" stroke="#c2dfe0" stroke-width="4.2" stroke-linecap="round"/></svg>
<svg style="left:1897px;top:196.7px;" width="19.5" height="4.4" viewBox="0 0 19.5 4.4"><rect x="0" y="0" width="19.5" height="4.4" rx="1" fill="#c2dfe0"/></svg>
<svg style="left:1928px;top:189.4px;" width="19" height="19" viewBox="0 0 19 19"><path d="M1.5 7.5 V1.5 H7.5 M11.5 1.5 H17.5 V7.5 M17.5 11.5 V17.5 H11.5 M7.5 17.5 H1.5 V11.5" fill="none" stroke="#c2dfe0" stroke-width="3"/></svg>
<div style="position:absolute;left:1966px;top:200.2px;font-size:23px;color:#d5f3f3;white-space:pre;line-height:0;letter-spacing:0.55px;">p364 025</div>
<svg style="left:3008.5px;top:188px;" width="17" height="22" viewBox="0 0 17 22"><path d="M1.5 0 H15.5 V3.8 H12.8 L13.6 9.5 L17 13 V15.5 H10 L9 21.5 H8 L7 15.5 H0 V13 L3.4 9.5 L4.2 3.8 H1.5 Z" fill="#c8c8c8"/></svg>
<div style="position:absolute;left:1862px;top:216.8px;width:1168px;height:115.2px;background:#ffffff;"></div>
<div style="position:absolute;left:1862px;top:216.8px;width:1168px;height:115.2px;overflow:hidden">
<div style="position:absolute;left:11.6px;top:18.2px;font-size:22px;color:#111;white-space:pre;line-height:0;letter-spacing:0.06px">i'm thrilled you all could make it tonight gentlemen  i know i ask a lot of you</div>
</div>
<div style="position:absolute;left:1862px;top:332px;width:1168px;height:35px;background:#6a6a6a;"></div>
<svg style="left:1870px;top:342px;" width="15" height="15" viewBox="0 0 15 15"><path d="M2 2 L13 13 M13 2 L2 13" stroke="#a4adad" stroke-width="4.2" stroke-linecap="round"/></svg>
<svg style="left:1897px;top:347.3px;" width="19.5" height="4.4" viewBox="0 0 19.5 4.4"><rect x="0" y="0" width="19.5" height="4.4" rx="1" fill="#c2dfe0"/></svg>
<svg style="left:1928px;top:340px;" width="19" height="19" viewBox="0 0 19 19"><path d="M1.5 7.5 V1.5 H7.5 M11.5 1.5 H17.5 V7.5 M17.5 11.5 V17.5 H11.5 M7.5 17.5 H1.5 V11.5" fill="none" stroke="#c2dfe0" stroke-width="3"/></svg>
<div style="position:absolute;left:1966px;top:350.8px;font-size:23px;color:#d5f3f3;white-space:pre;line-height:0;letter-spacing:0.55px;">p364 025</div>
<svg style="left:3008.5px;top:339px;" width="17" height="22" viewBox="0 0 17 22"><path d="M1.5 0 H15.5 V3.8 H12.8 L13.6 9.5 L17 13 V15.5 H10 L9 21.5 H8 L7 15.5 H0 V13 L3.4 9.5 L4.2 3.8 H1.5 Z" fill="#c8c8c8"/></svg>
<div style="position:absolute;left:1862px;top:367px;width:1168px;height:231.5px;background:#fff;"></div>
<div style="position:absolute;left:1862px;top:367px;width:43px;height:231.5px;background:#d4d4d4;"></div>
<div style="position:absolute;left:1905px;top:369px;width:1125px;height:2px;background:#e6e6e6;"></div>
<div style="position:absolute;left:1905px;top:401.1px;width:1125px;height:2px;background:#e6e6e6;"></div>
<div style="position:absolute;left:1905px;top:433.2px;width:1125px;height:2px;background:#e6e6e6;"></div>
<div style="position:absolute;left:1905px;top:465.3px;width:1125px;height:2px;background:#e6e6e6;"></div>
<div style="position:absolute;left:1905px;top:497.4px;width:1125px;height:2px;background:#b4b4b4;"></div>
<div style="position:absolute;left:1905px;top:529.5px;width:1125px;height:2px;background:#e6e6e6;"></div>
<div style="position:absolute;left:1905px;top:561.6px;width:1125px;height:2px;background:#e6e6e6;"></div>
<div style="position:absolute;left:1905px;top:593.7px;width:1125px;height:2px;background:#e6e6e6;"></div>
<div style="position:absolute;left:1901px;top:369.4px;width:4px;height:1.2px;background:#888;"></div>
<div style="position:absolute;left:1901px;top:401.5px;width:4px;height:1.2px;background:#888;"></div>
<div style="position:absolute;left:1901px;top:433.6px;width:4px;height:1.2px;background:#888;"></div>
<div style="position:absolute;left:1901px;top:465.7px;width:4px;height:1.2px;background:#888;"></div>
<div style="position:absolute;left:1901px;top:497.8px;width:4px;height:1.2px;background:#888;"></div>
<div style="position:absolute;left:1901px;top:529.9px;width:4px;height:1.2px;background:#888;"></div>
<div style="position:absolute;left:1901px;top:562px;width:4px;height:1.2px;background:#888;"></div>
<div style="position:absolute;left:1901px;top:594.1px;width:4px;height:1.2px;background:#888;"></div>
<svg style="left:1905px;top:367px;overflow:hidden" width="1125" height="231.5"><g transform="translate(0,-367)"><path d="M0 498 1 498 2 498 3 498 4 498 5 498 6 498 7 498 8 498 9 498 10 498 11 498 12 498 13 498 14 498 15 498 16 498 17 498 18 498 19 498 20 498 21 498 22 498 23 498 24 498 25 498 26 498 27 498 28 498 29 498 30 498 31 498 32 498 33 498 34 498 35 498 36 498 37 498 38 498 39 498 40 498 41 498 42 498 43 498 44 498 45 498 46 498 47 498 48 498 49 498 50 498 51 498 52 498 53 498 54 498 55 498 56 498 57 498 58 498 59 498 60 498 61 498 62 498 63 498 64 498 65 498 66 498 67 498 68 498 69 498 70 498 71 498 72 498 73 498 74 498 75 498 76 498 77 498 78 498 79 498 80 498 81 498 82 498 83 498 84 498 85 498 86 498 87 498 88 498 89 498 90 498 91 498 92 498 93 498 94 498 95 498 96 498 97 498 98 498 99 498 100 498 101 498 102 498 103 498 104 498 105 498 106 498 107 498 108 498 109 498 110 498 111 498 112 498 113 498 114 498 115 498 116 498 117 498 118 498 119 498 120 498 121 498 122 498 123 498 124 498 125 498 126 498 127 498 128 495 129 493 130 468 131 476 132 469 133 407 134 438 135 466 136 443 137 441 138 460 139 450 140 461 141 458 142 455 143 463 144 460 145 423 146 457 147 459 148 459 149 449 150 457 151 457 152 467 153 463 154 464 155 470 156 473 157 472 158 473 159 481 160 480 161 482 162 483 163 480 164 486 165 488 166 490 167 489 168 492 169 494 170 495 171 494 172 495 173 495 174 496 175 496 176 496 177 497 178 497 179 496 180 497 181 495 182 497 183 494 184 487 185 475 186 484 187 469 188 479 189 469 190 478 191 478 192 477 193 472 194 465 195 469 196 463 197 461 198 464 199 455 200 454 201 458 202 452 203 451 204 445 205 442 206 444 207 437 208 446 209 437 210 441 211 443 212 447 213 447 214 449 215 458 216 450 217 456 218 462 219 466 220 467 221 462 222 462 223 461 224 458 225 458 226 459 227 460 228 463 229 463 230 456 231 463 232 454 233 456 234 463 235 462 236 458 237 458 238 461 239 461 240 467 241 464 242 465 243 473 244 469 245 471 246 479 247 476 248 483 249 483 250 483 251 482 252 486 253 485 254 487 255 488 256 480 257 480 258 480 259 478 260 473 261 459 262 456 263 462 264 464 265 460 266 454 267 463 268 456 269 459 270 463 271 465 272 468 273 466 274 473 275 472 276 470 277 468 278 469 279 469 280 472 281 472 282 475 283 469 284 472 285 476 286 470 287 470 288 464 289 469 290 462 291 456 292 451 293 453 294 433 295 451 296 441 297 440 298 443 299 451 300 451 301 449 302 437 303 437 304 454 305 442 306 443 307 450 308 440 309 449 310 450 311 455 312 458 313 453 314 456 315 451 316 450 317 454 318 452 319 443 320 444 321 455 322 441 323 454 324 459 325 457 326 450 327 459 328 463 329 471 330 474 331 479 332 478 333 486 334 485 335 485 336 489 337 490 338 490 339 493 340 492 341 492 342 494 343 495 344 496 345 497 346 495 347 492 348 491 349 486 350 482 351 479 352 476 353 470 354 469 355 458 356 454 357 452 358 445 359 453 360 451 361 448 362 451 363 459 364 466 365 475 366 476 367 479 368 481 369 480 370 483 371 481 372 485 373 487 374 485 375 483 376 485 377 483 378 488 379 483 380 486 381 486 382 485 383 483 384 480 385 474 386 481 387 476 388 477 389 471 390 470 391 456 392 462 393 454 394 460 395 451 396 452 397 458 398 449 399 442 400 448 401 443 402 441 403 439 404 441 405 451 406 455 407 451 408 446 409 455 410 457 411 467 412 464 413 471 414 476 415 483 416 479 417 485 418 490 419 489 420 492 421 495 422 495 423 495 424 495 425 491 426 491 427 492 428 479 429 479 430 482 431 462 432 471 433 472 434 461 435 458 436 462 437 450 438 433 439 438 440 462 441 447 442 473 443 457 444 481 445 470 446 483 447 478 448 491 449 494 450 496 451 497 452 497 453 495 454 496 455 497 456 497 457 498 458 498 459 495 460 491 461 488 462 485 463 481 464 477 465 476 466 477 467 472 468 472 469 469 470 461 471 459 472 449 473 462 474 464 475 465 476 461 477 452 478 467 479 459 480 462 481 465 482 480 483 480 484 484 485 481 486 483 487 487 488 486 489 486 490 478 491 472 492 479 493 477 494 458 495 471 496 426 497 462 498 460 499 462 500 463 501 432 502 459 503 443 504 458 505 454 506 454 507 458 508 457 509 452 510 461 511 435 512 436 513 460 514 461 515 463 516 468 517 434 518 470 519 447 520 476 521 477 522 476 523 479 524 480 525 483 526 480 527 486 528 484 529 483 530 485 531 488 532 488 533 489 534 487 535 488 536 489 537 491 538 491 539 490 540 492 541 491 542 490 543 489 544 493 545 493 546 490 547 493 548 493 549 495 550 495 551 495 552 495 553 493 554 494 555 494 556 495 557 491 558 493 559 490 560 484 561 488 562 483 563 484 564 477 565 479 566 472 567 473 568 467 569 468 570 442 571 466 572 458 573 460 574 461 575 421 576 458 577 449 578 412 579 431 580 456 581 457 582 433 583 453 584 452 585 460 586 429 587 461 588 465 589 437 590 469 591 461 592 456 593 469 594 469 595 474 596 467 597 467 598 452 599 455 600 457 601 447 602 451 603 462 604 458 605 455 606 450 607 443 608 456 609 451 610 456 611 460 612 459 613 457 614 461 615 453 616 455 617 462 618 455 619 457 620 458 621 466 622 466 623 466 624 464 625 461 626 462 627 464 628 465 629 465 630 472 631 468 632 474 633 471 634 477 635 472 636 474 637 477 638 474 639 478 640 475 641 479 642 480 643 482 644 480 645 478 646 482 647 483 648 487 649 486 650 485 651 490 652 490 653 491 654 489 655 493 656 494 657 495 658 496 659 497 660 497 661 497 662 498 663 498 664 498 665 498 666 498 667 498 668 498 669 498 670 498 671 498 672 498 673 498 674 498 675 498 676 498 677 498 678 498 679 498 680 498 681 498 682 498 683 498 684 498 685 498 686 498 687 498 688 498 689 498 690 498 691 498 692 498 693 498 694 498 695 498 696 498 697 498 698 498 699 498 700 498 701 498 702 498 703 498 704 498 705 498 706 498 707 498 708 498 709 498 710 498 711 498 712 498 713 498 714 498 715 498 716 498 717 498 718 498 719 498 720 498 721 498 722 498 723 498 724 498 725 498 726 498 727 498 728 498 729 498 730 498 731 498 732 498 733 498 734 498 735 498 736 498 737 498 738 498 739 498 740 498 741 498 742 498 743 498 744 498 745 498 746 498 747 498 748 498 749 498 750 498 751 498 752 498 753 498 754 498 755 498 756 498 757 498 758 498 759 498 760 497 761 492 762 486 763 479 764 467 765 459 766 459 767 434 768 414 769 459 770 454 771 431 772 448 773 423 774 405 775 443 776 401 777 431 778 432 779 457 780 437 781 453 782 459 783 449 784 464 785 468 786 471 787 462 788 462 789 464 790 477 791 467 792 476 793 464 794 470 795 473 796 471 797 469 798 460 799 466 800 447 801 459 802 448 803 449 804 455 805 453 806 456 807 454 808 457 809 459 810 448 811 446 812 454 813 451 814 443 815 442 816 450 817 445 818 441 819 444 820 454 821 463 822 450 823 455 824 457 825 453 826 455 827 448 828 453 829 434 830 432 831 440 832 453 833 452 834 457 835 438 836 447 837 446 838 450 839 443 840 444 841 443 842 453 843 440 844 443 845 433 846 442 847 452 848 445 849 449 850 434 851 444 852 435 853 453 854 453 855 439 856 450 857 457 858 446 859 454 860 457 861 458 862 458 863 452 864 451 865 456 866 460 867 448 868 456 869 459 870 449 871 456 872 450 873 454 874 447 875 445 876 447 877 456 878 452 879 449 880 446 881 443 882 436 883 434 884 442 885 446 886 454 887 461 888 454 889 451 890 453 891 458 892 456 893 457 894 468 895 467 896 460 897 471 898 477 899 481 900 483 901 476 902 480 903 471 904 478 905 470 906 481 907 474 908 481 909 483 910 480 911 483 912 485 913 482 914 487 915 491 916 491 917 493 918 492 919 495 920 496 921 498 922 497 923 497 924 497 925 495 926 494 927 490 928 487 929 484 930 481 931 476 932 472 933 468 934 454 935 452 936 458 937 453 938 453 939 453 940 462 941 460 942 461 943 462 944 469 945 470 946 474 947 483 948 481 949 478 950 474 951 479 952 474 953 473 954 464 955 473 956 469 957 458 958 465 959 457 960 458 961 461 962 456 963 442 964 447 965 448 966 455 967 429 968 452 969 449 970 453 971 448 972 448 973 442 974 456 975 450 976 443 977 452 978 459 979 452 980 454 981 456 982 454 983 436 984 456 985 443 986 452 987 454 988 456 989 449 990 436 991 440 992 460 993 471 994 477 995 482 996 481 997 477 998 488 999 488 1000 476 1001 476 1002 477 1003 470 1004 466 1005 465 1006 464 1007 462 1008 440 1009 454 1010 456 1011 467 1012 456 1013 470 1014 474 1015 470 1016 483 1017 484 1018 484 1019 486 1020 486 1021 489 1022 489 1023 490 1024 485 1025 485 1026 490 1027 485 1028 488 1029 489 1030 488 1031 489 1032 487 1033 489 1034 484 1035 480 1036 485 1037 478 1038 488 1039 485 1040 488 1041 486 1042 481 1043 477 1044 477 1045 486 1046 487 1047 487 1048 486 1049 487 1050 488 1051 490 1052 489 1053 484 1054 479 1055 490 1056 491 1057 492 1058 491 1059 491 1060 492 1061 493 1062 492 1063 493 1064 486 1065 488 1066 493 1067 484 1068 494 1069 488 1070 494 1071 491 1072 495 1073 493 1074 494 1075 496 1076 496 1077 495 1078 495 1079 497 1080 496 1081 497 1082 497 1083 498 1084 498 1085 498 1086 498 1087 498 1088 498 1089 498 1090 498 1091 498 1092 498 1093 498 1094 498 1095 498 1096 498 1097 498 1098 498 1099 498 1100 498 1101 498 1102 498 1103 498 1104 498 1105 498 1106 498 1107 498 1108 498 1109 498 1110 498 1111 498 1112 498 1113 498 1114 498 1115 498 1116 498 1117 498 1118 498 1119 498 1120 498 1121 498 1122 498 1123 498 1124 498 1125 498 L1125 498 1124 498 1123 498 1122 498 1121 498 1120 498 1119 498 1118 498 1117 498 1116 498 1115 498 1114 498 1113 498 1112 498 1111 498 1110 498 1109 498 1108 498 1107 498 1106 498 1105 498 1104 498 1103 498 1102 498 1101 498 1100 498 1099 498 1098 498 1097 498 1096 498 1095 498 1094 498 1093 498 1092 498 1091 498 1090 498 1089 498 1088 498 1087 498 1086 498 1085 498 1084 499 1083 499 1082 501 1081 500 1080 500 1079 501 1078 500 1077 500 1076 501 1075 501 1074 501 1073 501 1072 502 1071 502 1070 506 1069 506 1068 502 1067 503 1066 503 1065 504 1064 504 1063 508 1062 507 1061 504 1060 503 1059 505 1058 507 1057 504 1056 507 1055 506 1054 505 1053 506 1052 507 1051 506 1050 514 1049 508 1048 507 1047 508 1046 508 1045 513 1044 506 1043 508 1042 508 1041 512 1040 513 1039 506 1038 506 1037 512 1036 506 1035 507 1034 507 1033 511 1032 514 1031 507 1030 509 1029 510 1028 513 1027 509 1026 507 1025 509 1024 509 1023 509 1022 512 1021 507 1020 511 1019 507 1018 511 1017 516 1016 515 1015 517 1014 519 1013 523 1012 525 1011 538 1010 544 1009 546 1008 533 1007 537 1006 532 1005 527 1004 522 1003 526 1002 523 1001 514 1000 522 999 517 998 511 997 518 996 521 995 524 994 537 993 527 992 535 991 540 990 534 989 554 988 533 987 532 986 534 985 533 984 537 983 547 982 539 981 539 980 538 979 550 978 537 977 537 976 540 975 533 974 538 973 534 972 552 971 546 970 533 969 540 968 541 967 550 966 555 965 538 964 534 963 537 962 533 961 531 960 533 959 532 958 534 957 532 956 525 955 527 954 521 953 522 952 526 951 518 950 519 949 528 948 517 947 519 946 519 945 521 944 534 943 531 942 529 941 537 940 531 939 531 938 546 937 531 936 540 935 539 934 538 933 522 932 522 931 516 930 516 929 514 928 510 927 509 926 505 925 503 924 503 923 501 922 501 921 499 920 500 919 501 918 503 917 503 916 507 915 508 914 510 913 511 912 511 911 517 910 512 909 512 908 513 907 515 906 521 905 522 904 514 903 518 902 517 901 526 900 529 899 530 898 521 897 525 896 527 895 532 894 536 893 549 892 535 891 537 890 550 889 534 888 552 887 533 886 551 885 535 884 536 883 535 882 536 881 540 880 538 879 535 878 532 877 532 876 529 875 556 874 536 873 556 872 536 871 530 870 529 869 547 868 549 867 532 866 538 865 529 864 550 863 531 862 533 861 548 860 528 859 529 858 533 857 531 856 549 855 545 854 533 853 550 852 536 851 532 850 540 849 545 848 530 847 533 846 534 845 541 844 534 843 530 842 529 841 531 840 542 839 555 838 537 837 540 836 543 835 542 834 544 833 555 832 553 831 556 830 539 829 533 828 539 827 535 826 552 825 534 824 557 823 538 822 537 821 547 820 540 819 557 818 542 817 546 816 550 815 540 814 546 813 546 812 540 811 560 810 561 809 539 808 544 807 539 806 541 805 555 804 544 803 535 802 535 801 536 800 535 799 556 798 535 797 532 796 536 795 538 794 533 793 534 792 537 791 547 790 546 789 533 788 538 787 541 786 536 785 530 784 532 783 543 782 541 781 538 780 535 779 533 778 532 777 553 776 535 775 529 774 528 773 529 772 539 771 522 770 527 769 547 768 521 767 520 766 533 765 520 764 514 763 513 762 509 761 506 760 499 759 498 758 498 757 498 756 498 755 498 754 498 753 498 752 498 751 498 750 498 749 498 748 498 747 498 746 498 745 498 744 498 743 498 742 498 741 498 740 498 739 498 738 498 737 498 736 498 735 498 734 498 733 498 732 498 731 498 730 498 729 498 728 498 727 498 726 498 725 498 724 498 723 498 722 498 721 498 720 498 719 498 718 498 717 498 716 498 715 498 714 498 713 498 712 498 711 498 710 498 709 498 708 498 707 498 706 498 705 498 704 498 703 498 702 498 701 498 700 498 699 498 698 498 697 498 696 498 695 498 694 498 693 498 692 498 691 498 690 498 689 498 688 498 687 498 686 498 685 498 684 498 683 498 682 498 681 498 680 498 679 498 678 498 677 498 676 498 675 498 674 498 673 498 672 498 671 498 670 498 669 498 668 498 667 498 666 498 665 498 664 498 663 499 662 500 661 501 660 501 659 501 658 503 657 503 656 503 655 504 654 508 653 507 652 508 651 510 650 514 649 516 648 518 647 518 646 520 645 516 644 522 643 520 642 521 641 521 640 523 639 521 638 521 637 523 636 519 635 518 634 520 633 537 632 522 631 520 630 526 629 524 628 520 627 527 626 530 625 525 624 544 623 531 622 538 621 534 620 538 619 535 618 547 617 532 616 540 615 536 614 534 613 545 612 545 611 534 610 529 609 534 608 532 607 544 606 528 605 531 604 528 603 535 602 536 601 528 600 528 599 534 598 531 597 528 596 528 595 530 594 529 593 525 592 526 591 534 590 527 589 537 588 527 587 536 586 532 585 532 584 540 583 532 582 542 581 539 580 547 579 530 578 545 577 547 576 541 575 544 574 544 573 531 572 541 571 530 570 522 569 528 568 523 567 525 566 521 565 515 564 517 563 514 562 521 561 510 560 509 559 507 558 506 557 504 556 505 555 503 554 503 553 503 552 503 551 505 550 503 549 507 548 506 547 504 546 504 545 503 544 503 543 504 542 506 541 508 540 508 539 505 538 511 537 509 536 505 535 509 534 514 533 511 532 508 531 507 530 516 529 510 528 509 527 511 526 522 525 512 524 519 523 513 522 513 521 515 520 527 519 515 518 515 517 529 516 522 515 520 514 522 513 537 512 536 511 525 510 525 509 524 508 523 507 521 506 525 505 523 504 540 503 548 502 521 501 523 500 543 499 526 498 522 497 525 496 523 495 540 494 518 493 517 492 524 491 518 490 524 489 512 488 522 487 513 486 518 485 516 484 520 483 517 482 519 481 521 480 532 479 528 478 531 477 535 476 525 475 526 474 526 473 526 472 524 471 527 470 525 469 522 468 521 467 522 466 516 465 516 464 510 463 508 462 506 461 505 460 503 459 503 458 499 457 499 456 500 455 500 454 501 453 500 452 501 451 500 450 502 449 503 448 507 447 513 446 513 445 511 444 527 443 519 442 542 441 516 440 521 439 518 438 522 437 518 436 516 435 514 434 533 433 518 432 527 431 510 430 523 429 517 428 506 427 505 426 503 425 509 424 503 423 506 422 502 421 502 420 505 419 505 418 508 417 511 416 515 415 514 414 523 413 520 412 522 411 538 410 537 409 533 408 540 407 535 406 539 405 547 404 542 403 543 402 539 401 582 400 557 399 573 398 536 397 540 396 564 395 535 394 535 393 526 392 529 391 542 390 522 389 540 388 524 387 527 386 519 385 515 384 515 383 521 382 510 381 510 380 514 379 514 378 512 377 509 376 508 375 508 374 510 373 509 372 511 371 508 370 509 369 516 368 514 367 520 366 517 365 517 364 523 363 524 362 565 361 554 360 527 359 551 358 529 357 527 356 543 355 539 354 537 353 531 352 520 351 517 350 515 349 510 348 511 347 503 346 502 345 500 344 500 343 501 342 502 341 504 340 503 339 505 338 505 337 508 336 506 335 509 334 509 333 514 332 512 331 516 330 525 329 529 328 527 327 538 326 530 325 545 324 531 323 547 322 544 321 550 320 540 319 544 318 553 317 555 316 542 315 543 314 543 313 543 312 558 311 543 310 546 309 548 308 540 307 545 306 546 305 541 304 541 303 555 302 535 301 542 300 544 299 538 298 558 297 538 296 538 295 561 294 536 293 542 292 563 291 542 290 539 289 538 288 532 287 542 286 536 285 531 284 529 283 530 282 525 281 536 280 535 279 532 278 532 277 531 276 530 275 535 274 537 273 531 272 540 271 538 270 539 269 538 268 537 267 538 266 536 265 543 264 536 263 550 262 537 261 532 260 530 259 525 258 520 257 519 256 521 255 516 254 515 253 514 252 516 251 521 250 519 249 519 248 523 247 525 246 526 245 529 244 527 243 537 242 538 241 540 240 556 239 546 238 541 237 535 236 544 235 556 234 543 233 539 232 554 231 535 230 534 229 537 228 536 227 533 226 541 225 547 224 535 223 538 222 540 221 548 220 551 219 533 218 546 217 539 216 543 215 539 214 552 213 540 212 555 211 544 210 544 209 540 208 566 207 543 206 542 205 544 204 553 203 544 202 547 201 564 200 543 199 555 198 550 197 530 196 537 195 526 194 530 193 527 192 531 191 534 190 517 189 517 188 514 187 517 186 512 185 509 184 506 183 502 182 500 181 500 180 501 179 501 178 501 177 501 176 501 175 501 174 502 173 503 172 503 171 503 170 504 169 505 168 505 167 508 166 507 165 511 164 509 163 517 162 517 161 512 160 515 159 513 158 515 157 515 156 521 155 542 154 529 153 543 152 546 151 552 150 556 149 544 148 543 147 544 146 551 145 542 144 538 143 546 142 551 141 552 140 542 139 550 138 550 137 529 136 531 135 529 134 526 133 524 132 541 131 514 130 519 129 504 128 501 127 499 126 498 125 498 124 498 123 498 122 498 121 498 120 498 119 498 118 498 117 498 116 498 115 498 114 498 113 498 112 498 111 498 110 498 109 498 108 498 107 498 106 498 105 498 104 498 103 498 102 498 101 498 100 498 99 498 98 498 97 498 96 498 95 498 94 498 93 498 92 498 91 498 90 498 89 498 88 498 87 498 86 498 85 498 84 498 83 498 82 498 81 498 80 498 79 498 78 498 77 498 76 498 75 498 74 498 73 498 72 498 71 498 70 498 69 498 68 498 67 498 66 498 65 498 64 498 63 498 62 498 61 498 60 498 59 498 58 498 57 498 56 498 55 498 54 498 53 498 52 498 51 498 50 498 49 498 48 498 47 498 46 498 45 498 44 498 43 498 42 498 41 498 40 498 39 498 38 498 37 498 36 498 35 498 34 498 33 498 32 498 31 498 30 498 29 498 28 498 27 498 26 498 25 498 24 498 23 498 22 498 21 498 20 498 19 498 18 498 17 498 16 498 15 498 14 498 13 498 12 498 11 498 10 498 9 498 8 498 7 498 6 498 5 498 4 498 3 498 2 498 1 498 0 498Z" fill="#1b1b1b"/></g></svg>
<div style="position:absolute;left:1905px;top:367px;width:2px;height:231.5px;background:#14c890;"></div>
<div style="position:absolute;left:1905px;top:367px;width:2px;height:2.5px;background:#ff4040;"></div>
<div style="position:absolute;left:898px;width:1000px;text-align:right;top:370.2px;font-size:19.5px;color:#111;white-space:pre;line-height:0;letter-spacing:0.3px;">0.8</div>
<div style="position:absolute;left:898px;width:1000px;text-align:right;top:402.3px;font-size:19.5px;color:#111;white-space:pre;line-height:0;letter-spacing:0.3px;">0.6</div>
<div style="position:absolute;left:898px;width:1000px;text-align:right;top:434.4px;font-size:19.5px;color:#111;white-space:pre;line-height:0;letter-spacing:0.3px;">0.4</div>
<div style="position:absolute;left:898px;width:1000px;text-align:right;top:466.5px;font-size:19.5px;color:#111;white-space:pre;line-height:0;letter-spacing:0.3px;">0.2</div>
<div style="position:absolute;left:898px;width:1000px;text-align:right;top:498.6px;font-size:19.5px;color:#111;white-space:pre;line-height:0;letter-spacing:0.3px;">0</div>
<div style="position:absolute;left:898px;width:1000px;text-align:right;top:530.7px;font-size:19.5px;color:#111;white-space:pre;line-height:0;letter-spacing:0.3px;">-0.2</div>
<div style="position:absolute;left:898px;width:1000px;text-align:right;top:562.8px;font-size:19.5px;color:#111;white-space:pre;line-height:0;letter-spacing:0.3px;">-0.4</div>
<div style="position:absolute;left:898px;width:1000px;text-align:right;top:594.9px;font-size:19.5px;color:#111;white-space:pre;line-height:0;letter-spacing:0.3px;">-0.6</div>
<div style="position:absolute;left:1862px;top:598.5px;width:1168px;height:35px;background:#6a6a6a;"></div>
<svg style="left:1870px;top:608.5px;" width="15" height="15" viewBox="0 0 15 15"><path d="M2 2 L13 13 M13 2 L2 13" stroke="#c2dfe0" stroke-width="4.2" stroke-linecap="round"/></svg>
<svg style="left:1897px;top:613.8px;" width="19.5" height="4.4" viewBox="0 0 19.5 4.4"><rect x="0" y="0" width="19.5" height="4.4" rx="1" fill="#c2dfe0"/></svg>
<svg style="left:1928px;top:606.5px;" width="19" height="19" viewBox="0 0 19 19"><path d="M1.5 7.5 V1.5 H7.5 M11.5 1.5 H17.5 V7.5 M17.5 11.5 V17.5 H11.5 M7.5 17.5 H1.5 V11.5" fill="none" stroke="#c2dfe0" stroke-width="3"/></svg>
<div style="position:absolute;left:1966px;top:617.2px;font-size:23px;color:#d5f3f3;white-space:pre;line-height:0;letter-spacing:0.55px;">word alignment</div>
<svg style="left:3008.5px;top:605.5px;" width="17" height="22" viewBox="0 0 17 22"><path d="M1.5 0 H15.5 V3.8 H12.8 L13.6 9.5 L17 13 V15.5 H10 L9 21.5 H8 L7 15.5 H0 V13 L3.4 9.5 L4.2 3.8 H1.5 Z" fill="#c8c8c8"/></svg>
<div style="position:absolute;left:1862px;top:633.5px;width:1168px;height:116.2px;background:#ffffff;"></div>
<div style="position:absolute;left:1862px;top:633.5px;width:43px;height:116.2px;background:#d4d4d4;"></div>
<div style="position:absolute;left:1905px;top:633.5px;width:1.5px;height:116.2px;background:#2ed8a0;"></div>
<div style="position:absolute;left:1905px;top:633.5px;width:1.5px;height:3px;background:#ff5050;"></div>
<div style="position:absolute;left:1464.7px;width:1000px;text-align:center;top:693.1px;font-size:21.5px;color:#111;white-space:pre;line-height:0;letter-spacing:0.4px;">^</div>
<div style="position:absolute;left:1549.2px;width:1000px;text-align:center;top:693.1px;font-size:21.5px;color:#111;white-space:pre;line-height:0;letter-spacing:0.4px;">i'm</div>
<div style="position:absolute;left:1616.8px;width:1000px;text-align:center;top:693.1px;font-size:21.5px;color:#111;white-space:pre;line-height:0;letter-spacing:0.4px;">thrilled</div>
<div style="position:absolute;left:1680px;width:1000px;text-align:center;top:693.1px;font-size:21.5px;color:#111;white-space:pre;line-height:0;letter-spacing:0.4px;">you</div>
<div style="position:absolute;left:1720.7px;width:1000px;text-align:center;top:693.1px;font-size:21.5px;color:#111;white-space:pre;line-height:0;letter-spacing:0.4px;">all</div>
<div style="position:absolute;left:1765.8px;width:1000px;text-align:center;top:693.1px;font-size:21.5px;color:#111;white-space:pre;line-height:0;letter-spacing:0.4px;">...</div>
<div style="position:absolute;left:1814.2px;width:1000px;text-align:center;top:693.1px;font-size:21.5px;color:#111;white-space:pre;line-height:0;letter-spacing:0.4px;">...</div>
<div style="position:absolute;left:1850.3px;width:1000px;text-align:center;top:693.1px;font-size:21.5px;color:#111;white-space:pre;line-height:0;letter-spacing:0.4px;">it</div>
<div style="position:absolute;left:1906.6px;width:1000px;text-align:center;top:693.1px;font-size:21.5px;color:#111;white-space:pre;line-height:0;letter-spacing:0.4px;">tonight</div>
<div style="position:absolute;left:2005.8px;width:1000px;text-align:center;top:693.1px;font-size:21.5px;color:#111;white-space:pre;line-height:0;letter-spacing:0.4px;">gentlemen</div>
<div style="position:absolute;left:2112.1px;width:1000px;text-align:center;top:693.1px;font-size:21.5px;color:#111;white-space:pre;line-height:0;letter-spacing:0.4px;">^</div>
<div style="position:absolute;left:2177.6px;width:1000px;text-align:center;top:693.1px;font-size:21.5px;color:#111;white-space:pre;line-height:0;letter-spacing:0.4px;">i</div>
<div style="position:absolute;left:2214.8px;width:1000px;text-align:center;top:693.1px;font-size:21.5px;color:#111;white-space:pre;line-height:0;letter-spacing:0.4px;">...</div>
<div style="position:absolute;left:2255.2px;width:1000px;text-align:center;top:693.1px;font-size:21.5px;color:#111;white-space:pre;line-height:0;letter-spacing:0.4px;">i</div>
<div style="position:absolute;left:2303.6px;width:1000px;text-align:center;top:693.1px;font-size:21.5px;color:#111;white-space:pre;line-height:0;letter-spacing:0.4px;">ask</div>
<div style="position:absolute;left:2341.1px;width:1000px;text-align:center;top:693.1px;font-size:21.5px;color:#111;white-space:pre;line-height:0;letter-spacing:0.4px;">a</div>
<div style="position:absolute;left:2378.2px;width:1000px;text-align:center;top:693.1px;font-size:21.5px;color:#111;white-space:pre;line-height:0;letter-spacing:0.4px;">lot</div>
<div style="position:absolute;left:2422.1px;width:1000px;text-align:center;top:693.1px;font-size:21.5px;color:#111;white-space:pre;line-height:0;letter-spacing:0.4px;">of</div>
<div style="position:absolute;left:2458.2px;width:1000px;text-align:center;top:693.1px;font-size:21.5px;color:#111;white-space:pre;line-height:0;letter-spacing:0.4px;">you</div>
<div style="position:absolute;left:2505.4px;width:1000px;text-align:center;top:693.1px;font-size:21.5px;color:#111;white-space:pre;line-height:0;letter-spacing:0.4px;">^</div>
<div style="position:absolute;left:2022.1px;top:633.5px;width:4.4px;height:116.2px;background:#0000ee;"></div>
<div style="position:absolute;left:2071.8px;top:633.5px;width:4.4px;height:116.2px;background:#0000ee;"></div>
<div style="position:absolute;left:2157.4px;top:633.5px;width:4.4px;height:116.2px;background:#0000ee;"></div>
<div style="position:absolute;left:2198.2px;top:633.5px;width:4.4px;height:116.2px;background:#0000ee;"></div>
<div style="position:absolute;left:2238.7px;top:633.5px;width:4.4px;height:116.2px;background:#0000ee;"></div>
<div style="position:absolute;left:2288.4px;top:633.5px;width:4.4px;height:116.2px;background:#0000ee;"></div>
<div style="position:absolute;left:2335.7px;top:633.5px;width:4.4px;height:116.2px;background:#0000ee;"></div>
<div style="position:absolute;left:2360.5px;top:633.5px;width:4.4px;height:116.2px;background:#0000ee;"></div>
<div style="position:absolute;left:2448.3px;top:633.5px;width:4.4px;height:116.2px;background:#0000ee;"></div>
<div style="position:absolute;left:2559px;top:633.5px;width:4.4px;height:116.2px;background:#0000ee;"></div>
<div style="position:absolute;left:2660.7px;top:633.5px;width:4.4px;height:116.2px;background:#0000ee;"></div>
<div style="position:absolute;left:2690px;top:633.5px;width:4.4px;height:116.2px;background:#0000ee;"></div>
<div style="position:absolute;left:2735.1px;top:633.5px;width:4.4px;height:116.2px;background:#0000ee;"></div>
<div style="position:absolute;left:2770.8px;top:633.5px;width:4.4px;height:116.2px;background:#0000ee;"></div>
<div style="position:absolute;left:2832px;top:633.5px;width:4.4px;height:116.2px;background:#0000ee;"></div>
<div style="position:absolute;left:2845.7px;top:633.5px;width:4.4px;height:116.2px;background:#0000ee;"></div>
<div style="position:absolute;left:2906.4px;top:633.5px;width:4.4px;height:116.2px;background:#0000ee;"></div>
<div style="position:absolute;left:2933.4px;top:633.5px;width:4.4px;height:116.2px;background:#0000ee;"></div>
<div style="position:absolute;left:2978.6px;top:633.5px;width:4.4px;height:116.2px;background:#0000ee;"></div>
<div style="position:absolute;left:3029px;top:633.5px;width:1px;height:116.2px;background:#6a8ad0;"></div>
<div style="position:absolute;left:1862px;top:749.7px;width:1168px;height:35px;background:#6a6a6a;"></div>
<svg style="left:1870px;top:759.7px;" width="15" height="15" viewBox="0 0 15 15"><path d="M2 2 L13 13 M13 2 L2 13" stroke="#c2dfe0" stroke-width="4.2" stroke-linecap="round"/></svg>
<svg style="left:1897px;top:765px;" width="19.5" height="4.4" viewBox="0 0 19.5 4.4"><rect x="0" y="0" width="19.5" height="4.4" rx="1" fill="#c2dfe0"/></svg>
<svg style="left:1928px;top:757.7px;" width="19" height="19" viewBox="0 0 19 19"><path d="M1.5 7.5 V1.5 H7.5 M11.5 1.5 H17.5 V7.5 M17.5 11.5 V17.5 H11.5 M7.5 17.5 H1.5 V11.5" fill="none" stroke="#c2dfe0" stroke-width="3"/></svg>
<div style="position:absolute;left:1966px;top:768.5px;font-size:23px;color:#d5f3f3;white-space:pre;line-height:0;letter-spacing:0.55px;">lip sync</div>
<svg style="left:3008.5px;top:756.7px;" width="17" height="22" viewBox="0 0 17 22"><path d="M1.5 0 H15.5 V3.8 H12.8 L13.6 9.5 L17 13 V15.5 H10 L9 21.5 H8 L7 15.5 H0 V13 L3.4 9.5 L4.2 3.8 H1.5 Z" fill="#c8c8c8"/></svg>
<div style="position:absolute;left:1862px;top:784.7px;width:1168px;height:115.9px;background:#ffffff;"></div>
<div style="position:absolute;left:1862px;top:784.7px;width:43px;height:115.9px;background:#d4d4d4;"></div>
<div style="position:absolute;left:1905px;top:784.7px;width:1.5px;height:115.9px;background:#2ed8a0;"></div>
<div style="position:absolute;left:1905px;top:784.7px;width:1.5px;height:3px;background:#ff5050;"></div>
<div style="position:absolute;left:1929.4px;width:1000px;text-align:center;top:844.1px;font-size:21.5px;color:#111;white-space:pre;line-height:0;letter-spacing:0.4px;">phonetic</div>
<div style="position:absolute;left:2491.9px;width:1000px;text-align:center;top:844.1px;font-size:21.5px;color:#111;white-space:pre;line-height:0;letter-spacing:0.4px;">...</div>
<div style="position:absolute;left:2951.6px;top:784.7px;width:4.4px;height:115.9px;background:#0000ee;"></div>
<div style="position:absolute;left:3029px;top:784.7px;width:1px;height:115.9px;background:#6a8ad0;"></div>
<div style="position:absolute;left:1862px;top:900.6px;width:1168px;height:34.9px;background:#6a6a6a;"></div>
<svg style="left:1870px;top:910.5px;" width="15" height="15" viewBox="0 0 15 15"><path d="M2 2 L13 13 M13 2 L2 13" stroke="#c2dfe0" stroke-width="4.2" stroke-linecap="round"/></svg>
<svg style="left:1897px;top:915.8px;" width="19.5" height="4.4" viewBox="0 0 19.5 4.4"><rect x="0" y="0" width="19.5" height="4.4" rx="1" fill="#c2dfe0"/></svg>
<svg style="left:1928px;top:908.5px;" width="19" height="19" viewBox="0 0 19 19"><path d="M1.5 7.5 V1.5 H7.5 M11.5 1.5 H17.5 V7.5 M17.5 11.5 V17.5 H11.5 M7.5 17.5 H1.5 V11.5" fill="none" stroke="#c2dfe0" stroke-width="3"/></svg>
<div style="position:absolute;left:1966px;top:919.3px;font-size:23px;color:#d5f3f3;white-space:pre;line-height:0;letter-spacing:0.55px;">behavior mode</div>
<svg style="left:3008.5px;top:907.6px;" width="17" height="22" viewBox="0 0 17 22"><path d="M1.5 0 H15.5 V3.8 H12.8 L13.6 9.5 L17 13 V15.5 H10 L9 21.5 H8 L7 15.5 H0 V13 L3.4 9.5 L4.2 3.8 H1.5 Z" fill="#c8c8c8"/></svg>
<div style="position:absolute;left:1862px;top:935.5px;width:1168px;height:116px;background:#ffffff;"></div>
<div style="position:absolute;left:1862px;top:935.5px;width:43px;height:116px;background:#d4d4d4;"></div>
<div style="position:absolute;left:1905px;top:935.5px;width:1.5px;height:116px;background:#2ed8a0;"></div>
<div style="position:absolute;left:1905px;top:935.5px;width:1.5px;height:3px;background:#ff5050;"></div>
<div style="position:absolute;left:1967.5px;width:1000px;text-align:center;top:995px;font-size:21.5px;color:#111;white-space:pre;line-height:0;letter-spacing:0.4px;">Neutral</div>
<div style="position:absolute;left:3029px;top:935.5px;width:1px;height:116px;background:#6a8ad0;"></div>
<div style="position:absolute;left:1862px;top:1051.5px;width:1168px;height:34.9px;background:#6a6a6a;"></div>
<svg style="left:1870px;top:1061.5px;" width="15" height="15" viewBox="0 0 15 15"><path d="M2 2 L13 13 M13 2 L2 13" stroke="#c2dfe0" stroke-width="4.2" stroke-linecap="round"/></svg>
<svg style="left:1897px;top:1066.8px;" width="19.5" height="4.4" viewBox="0 0 19.5 4.4"><rect x="0" y="0" width="19.5" height="4.4" rx="1" fill="#c2dfe0"/></svg>
<svg style="left:1928px;top:1059.5px;" width="19" height="19" viewBox="0 0 19 19"><path d="M1.5 7.5 V1.5 H7.5 M11.5 1.5 H17.5 V7.5 M17.5 11.5 V17.5 H11.5 M7.5 17.5 H1.5 V11.5" fill="none" stroke="#c2dfe0" stroke-width="3"/></svg>
<div style="position:absolute;left:1966px;top:1070.2px;font-size:23px;color:#d5f3f3;white-space:pre;line-height:0;letter-spacing:0.55px;">expressions</div>
<svg style="left:3008.5px;top:1058.5px;" width="17" height="22" viewBox="0 0 17 22"><path d="M1.5 0 H15.5 V3.8 H12.8 L13.6 9.5 L17 13 V15.5 H10 L9 21.5 H8 L7 15.5 H0 V13 L3.4 9.5 L4.2 3.8 H1.5 Z" fill="#c8c8c8"/></svg>
<div style="position:absolute;left:1862px;top:1086.4px;width:1168px;height:115.6px;background:#ffffff;"></div>
<div style="position:absolute;left:1862px;top:1086.4px;width:43px;height:115.6px;background:#d4d4d4;"></div>
<div style="position:absolute;left:1905px;top:1086.4px;width:1.5px;height:115.6px;background:#2ed8a0;"></div>
<div style="position:absolute;left:1905px;top:1086.4px;width:1.5px;height:3px;background:#ff5050;"></div>
<div style="position:absolute;left:1464.5px;width:1000px;text-align:center;top:1145.7px;font-size:21.5px;color:#111;white-space:pre;line-height:0;letter-spacing:0.4px;">^</div>
<div style="position:absolute;left:1680.5px;width:1000px;text-align:center;top:1145.7px;font-size:21.5px;color:#111;white-space:pre;line-height:0;letter-spacing:0.4px;">/Neutral/high/1</div>
<div style="position:absolute;left:1999.7px;width:1000px;text-align:center;top:1145.7px;font-size:21.5px;color:#111;white-space:pre;line-height:0;letter-spacing:0.4px;">/Neutral/low/3</div>
<div style="position:absolute;left:2321.4px;width:1000px;text-align:center;top:1145.7px;font-size:21.5px;color:#111;white-space:pre;line-height:0;letter-spacing:0.4px;">/Neutral/high/2</div>
<div style="position:absolute;left:2505.2px;width:1000px;text-align:center;top:1145.7px;font-size:21.5px;color:#111;white-space:pre;line-height:0;letter-spacing:0.4px;">^</div>
<div style="position:absolute;left:2021.9px;top:1086.4px;width:4.4px;height:115.6px;background:#0000ee;"></div>
<div style="position:absolute;left:2334.7px;top:1086.4px;width:4.4px;height:115.6px;background:#0000ee;"></div>
<div style="position:absolute;left:2660.2px;top:1086.4px;width:4.4px;height:115.6px;background:#0000ee;"></div>
<div style="position:absolute;left:2978.2px;top:1086.4px;width:4.4px;height:115.6px;background:#0000ee;"></div>
<div style="position:absolute;left:3029px;top:1086.4px;width:1px;height:115.6px;background:#6a8ad0;"></div>
<div style="position:absolute;left:1862px;top:1202px;width:1168px;height:35.5px;background:#6a6a6a;"></div>
<svg style="left:1870px;top:1212.2px;" width="15" height="15" viewBox="0 0 15 15"><path d="M2 2 L13 13 M13 2 L2 13" stroke="#c2dfe0" stroke-width="4.2" stroke-linecap="round"/></svg>
<svg style="left:1897px;top:1217.5px;" width="19.5" height="4.4" viewBox="0 0 19.5 4.4"><rect x="0" y="0" width="19.5" height="4.4" rx="1" fill="#c2dfe0"/></svg>
<svg style="left:1928px;top:1210.2px;" width="19" height="19" viewBox="0 0 19 19"><path d="M1.5 7.5 V1.5 H7.5 M11.5 1.5 H17.5 V7.5 M17.5 11.5 V17.5 H11.5 M7.5 17.5 H1.5 V11.5" fill="none" stroke="#c2dfe0" stroke-width="3"/></svg>
<div style="position:absolute;left:1966px;top:1221px;font-size:23px;color:#d5f3f3;white-space:pre;line-height:0;letter-spacing:0.55px;">modifiers</div>
<svg style="left:3008.5px;top:1209px;" width="17" height="22" viewBox="0 0 17 22"><path d="M1.5 0 H15.5 V3.8 H12.8 L13.6 9.5 L17 13 V15.5 H10 L9 21.5 H8 L7 15.5 H0 V13 L3.4 9.5 L4.2 3.8 H1.5 Z" fill="#c8c8c8"/></svg>
<div style="position:absolute;left:1862px;top:1237.5px;width:1168px;height:230.5px;background:#fff;"></div>
<div style="position:absolute;left:1862px;top:1237.5px;width:43px;height:230.5px;background:#d4d4d4;"></div>
<div style="position:absolute;left:1905px;top:1247.4px;width:1125px;height:2px;background:#e6e6e6;"></div>
<div style="position:absolute;left:1901px;top:1247.8px;width:4px;height:1.2px;background:#888;"></div>
<div style="position:absolute;left:898px;width:1000px;text-align:right;top:1248.6px;font-size:19.5px;color:#111;white-space:pre;line-height:0;letter-spacing:0.3px;">2</div>
<div style="position:absolute;left:1905px;top:1300px;width:1125px;height:2px;background:#e6e6e6;"></div>
<div style="position:absolute;left:1901px;top:1300.4px;width:4px;height:1.2px;background:#888;"></div>
<div style="position:absolute;left:898px;width:1000px;text-align:right;top:1301.2px;font-size:19.5px;color:#111;white-space:pre;line-height:0;letter-spacing:0.3px;">1.5</div>
<div style="position:absolute;left:1905px;top:1351.6px;width:1125px;height:2px;background:#e6e6e6;"></div>
<div style="position:absolute;left:1901px;top:1352px;width:4px;height:1.2px;background:#888;"></div>
<div style="position:absolute;left:898px;width:1000px;text-align:right;top:1352.8px;font-size:19.5px;color:#111;white-space:pre;line-height:0;letter-spacing:0.3px;">1</div>
<div style="position:absolute;left:1905px;top:1404px;width:1125px;height:2px;background:#e6e6e6;"></div>
<div style="position:absolute;left:1901px;top:1404.4px;width:4px;height:1.2px;background:#888;"></div>
<div style="position:absolute;left:898px;width:1000px;text-align:right;top:1405.2px;font-size:19.5px;color:#111;white-space:pre;line-height:0;letter-spacing:0.3px;">0.5</div>
<div style="position:absolute;left:1905px;top:1456.5px;width:1125px;height:2px;background:#e6e6e6;"></div>
<div style="position:absolute;left:1901px;top:1456.9px;width:4px;height:1.2px;background:#888;"></div>
<div style="position:absolute;left:898px;width:1000px;text-align:right;top:1457.7px;font-size:19.5px;color:#111;white-space:pre;line-height:0;letter-spacing:0.3px;">0</div>
<div style="position:absolute;left:1905px;top:1351.3px;width:1125px;height:2.6px;background:#8a4a46;"></div>
<div style="position:absolute;left:1905px;top:1456px;width:1125px;height:3px;background:#f020c0;"></div>
<div style="position:absolute;left:1905px;top:1237.5px;width:1.6px;height:230.5px;background:#2ed8a0;"></div>
<div style="position:absolute;left:1862px;top:1468px;width:1189px;height:5.6px;background:#d6d6d6;"></div>
<div style="position:absolute;left:1862px;top:1473.6px;width:1189px;height:1.4px;background:#3a3a3a;"></div>
<div style="position:absolute;left:1862px;top:1475px;width:1189px;height:1.3px;background:#f4f4f4;"></div>
<div style="position:absolute;left:1862px;top:1476.3px;width:1189px;height:35.5px;background:#6a6a6a;border-top:1.5px solid #3e3e3e;border-bottom:1px solid #4a4a4a;"></div>
<div style="position:absolute;left:1904px;top:1476.3px;width:2.5px;height:35.5px;background:#454545;"></div>
<div style="position:absolute;left:3029px;top:1476.3px;width:2.5px;height:35.5px;background:#454545;"></div>
<div style="position:absolute;left:2426.6px;top:1494.9px;font-size:20.5px;color:#111;white-space:pre;line-height:0;letter-spacing:0.6px;">4.987</div>
<svg style="left:2486.1px;top:1479px;" width="24.5" height="29.5" viewBox="0 0 24.5 29.5"><path d="M2 1.5 Q0.5 0.5 0.5 3 V26.5 Q0.5 29.0 2 28.0 L23.5 16.25 Q24.5 14.75 23.5 13.25 Z" fill="#000"/></svg>
<div style="position:absolute;left:1862px;top:1511.8px;width:1189px;height:30.5px;background:#efefef;"></div>
<div style="position:absolute;left:1877px;top:1527.9px;font-size:20.5px;color:#111;white-space:pre;line-height:0;letter-spacing:0.6px;">0.000</div>
<div style="position:absolute;left:1902.5px;top:1516.8px;width:2px;height:20.5px;background:#f06060;"></div>
<div style="position:absolute;left:1862px;top:1511.8px;width:1189px;height:30.5px;overflow:hidden">
<div style="position:absolute;left:1140px;top:16.1px;font-size:20.5px;color:#111;white-space:pre;line-height:0;letter-spacing:0.6px">4.987</div>
</div>
<div style="position:absolute;left:1862px;top:1542.3px;width:1189px;height:35.4px;background:#6a6a6a;border-top:1.5px solid #3e3e3e;border-bottom:1px solid #4a4a4a;"></div>
<div style="position:absolute;left:1904px;top:1542.3px;width:2.5px;height:35.4px;background:#454545;"></div>
<div style="position:absolute;left:3029px;top:1542.3px;width:2.5px;height:35.4px;background:#454545;"></div>
<div style="position:absolute;left:2426.6px;top:1560.8px;font-size:20.5px;color:#111;white-space:pre;line-height:0;letter-spacing:0.6px;">4.987</div>
<svg style="left:2486.1px;top:1545px;" width="24.5" height="29.5" viewBox="0 0 24.5 29.5"><path d="M2 1.5 Q0.5 0.5 0.5 3 V26.5 Q0.5 29.0 2 28.0 L23.5 16.25 Q24.5 14.75 23.5 13.25 Z" fill="#000"/></svg>
<div style="position:absolute;left:1862px;top:1577.7px;width:1189px;height:65.3px;background:#efefef;"></div>
<div style="position:absolute;left:1866px;top:1586.7px;width:1182px;height:13.8px;background:#adadad;border-radius:8px;"></div>
<div style="position:absolute;left:1865px;top:1624.1px;font-size:21px;color:#111;white-space:pre;line-height:0;letter-spacing:0.1px;">Current Time (s)</div>
<div style="position:absolute;left:2022.8px;top:1604.7px;width:79.5px;height:36.3px;background:#fff;"></div>
<div style="position:absolute;left:2027.3px;top:1624.2px;font-size:20.5px;color:#111;white-space:pre;line-height:0;letter-spacing:0.6px;">0.000 s</div>
<div style="position:absolute;left:2360.6px;top:1604.4px;width:37.8px;height:37.6px;background:#6a6a6a;"></div>
<svg style="left:2360.6px;top:1604.4px;" width="37.8" height="37.6" viewBox="0 0 37.8 37.6"><g fill="#000"><g transform="translate(5.400000000000091,6.599999999999955)"><rect x="0" y="0" width="4" height="21"/><path d="M4.5 10.5 L12.8 1 V20 Z M13.5 10.5 L22.5 1 V20 Z" stroke="#000" stroke-width="2" stroke-linejoin="round"/></g></g></svg>
<div style="position:absolute;left:2400.8px;top:1604.4px;width:34.5px;height:37.6px;background:#6a6a6a;"></div>
<svg style="left:2400.8px;top:1604.4px;" width="34.5" height="37.6" viewBox="0 0 34.5 37.6"><g fill="#000"><path d="M5.75 4.7999999999999545 V32.299999999999955 L29.75 18.599999999999955 Z" stroke="#000" stroke-width="2.6" stroke-linejoin="round"/></g></svg>
<div style="position:absolute;left:2437.8px;top:1604.4px;width:34.8px;height:37.6px;background:#6a6a6a;"></div>
<svg style="left:2437.8px;top:1604.4px;" width="34.8" height="37.6" viewBox="0 0 34.8 37.6"><g fill="#000"><rect x="5.199999999999864" y="5.2999999999999545" width="24.6" height="24.6" rx="3.5"/></g></svg>
<div style="position:absolute;left:2475px;top:1604.4px;width:37px;height:37.6px;background:#6a6a6a;"></div>
<svg style="left:2475px;top:1604.4px;" width="37" height="37.6" viewBox="0 0 37 37.6"><g fill="#000"><g transform="translate(5.0,6.599999999999955)"><path d="M1 1 L9.5 10.5 L1 20 Z M10 1 L18.5 10.5 L10 20 Z" stroke="#000" stroke-width="2" stroke-linejoin="round"/><rect x="23" y="0" width="4" height="21"/></g></g></svg>
<div style="position:absolute;left:2515px;top:1604.4px;width:37.2px;height:37.6px;background:#6a6a6a;"></div>
<svg style="left:2515px;top:1604.4px;" width="37.2" height="37.6" viewBox="0 0 37.2 37.6"><g fill="#000"><path d="M25.73 9.37 A11.5 11.5 0 1 0 25.30 26.05" fill="none" stroke="#e6e6e6" stroke-width="4.3" stroke-linecap="round"/><path d="M28.10 3.30 H31.90 V16.00 H19.50 V12.10 H28.10 Z" fill="#e6e6e6" stroke="#e6e6e6" stroke-width="1" stroke-linejoin="round"/></g></svg>
<div style="position:absolute;left:2854px;top:1604.4px;width:41.9px;height:37.6px;background:#6a6a6a;"></div>
<svg style="left:2854px;top:1604.4px;" width="41.9" height="37.6" viewBox="0 0 41.9 37.6"><circle cx="17.950000000000045" cy="14.599999999999955" r="9.3" fill="none" stroke="#000" stroke-width="4.3"/><path d="M24.450000000000045 21.099999999999955 L31.950000000000045 28.599999999999955" stroke="#000" stroke-width="4.5" stroke-linecap="round"/><path d="M12.750000000000046 14.599999999999955 H23.150000000000045 M17.950000000000045 9.399999999999956 V19.799999999999955" stroke="#000" stroke-width="3.2"/></svg>
<div style="position:absolute;left:2898.6px;top:1604.4px;width:41.2px;height:37.6px;background:#6a6a6a;"></div>
<svg style="left:2898.6px;top:1604.4px;" width="41.2" height="37.6" viewBox="0 0 41.2 37.6"><circle cx="17.600000000000136" cy="14.599999999999955" r="9.3" fill="none" stroke="#000" stroke-width="4.3"/><path d="M24.100000000000136 21.099999999999955 L31.600000000000136 28.599999999999955" stroke="#000" stroke-width="4.5" stroke-linecap="round"/><path d="M12.100000000000136 14.599999999999955 H23.100000000000136" stroke="#000" stroke-width="3.2"/></svg>
<div style="position:absolute;left:2942.5px;top:1604.4px;width:43.3px;height:37.6px;background:#6a6a6a;"></div>
<svg style="left:2942.5px;top:1604.4px;" width="43.3" height="37.6" viewBox="0 0 43.3 37.6"><circle cx="18.65000000000009" cy="14.599999999999955" r="9.3" fill="none" stroke="#000" stroke-width="4.3"/><path d="M25.15000000000009 21.099999999999955 L32.65000000000009 28.599999999999955" stroke="#000" stroke-width="4.5" stroke-linecap="round"/><path d="M4.150000000000091 10.599999999999955 V31.099999999999955 M38.15000000000009 10.599999999999955 V31.099999999999955" stroke="#000" stroke-width="1.3"/></svg>
<div style="position:absolute;left:2988.2px;top:1604.4px;width:41.5px;height:37.6px;background:#6a6a6a;"></div>
<svg style="left:2988.2px;top:1604.4px;" width="41.5" height="37.6" viewBox="0 0 41.5 37.6"><circle cx="17.75" cy="14.599999999999955" r="9.3" fill="none" stroke="#000" stroke-width="4.3"/><path d="M24.25 21.099999999999955 L31.75 28.599999999999955" stroke="#000" stroke-width="4.5" stroke-linecap="round"/></svg>
<div style="position:absolute;left:1861px;top:136px;width:1px;height:1507px;background:#2a2a2a;"></div>
</div></div>
<div style="position:absolute;left:3142px;top:89px;width:537px;height:586px;border-radius:8px;box-shadow:0 14px 34px rgba(0,25,30,0.40), 0 0 0 1px rgba(110,150,150,0.45);background:#434343"></div>
<div style="position:absolute;left:3142px;top:89px;width:537px;height:586px;border-radius:8px;overflow:hidden">
<div style="position:absolute;left:-3142px;top:-89px;width:3755px;height:1733px">
<div style="position:absolute;left:3142px;top:89px;width:537px;height:43px;background:#f3f3f3;border-radius:8px 8px 0 0;"></div>
<svg style="left:3153px;top:97px;" width="24" height="24" viewBox="0 0 24 24"><defs><linearGradient id="ig3153" x1="0" y1="0" x2="0" y2="1"><stop offset="0" stop-color="#2a2f31"/><stop offset="0.45" stop-color="#0c0e0e"/><stop offset="1" stop-color="#060707"/></linearGradient></defs><rect x="0" y="0" width="24" height="24" rx="4.5" fill="url(#ig3153)"/><path d="M1 8.5 C4 3.5, 8 3.5, 11 10 S17 21, 23 15" fill="none" stroke="#3fd483" stroke-width="1.4"/></svg>
<div style="position:absolute;left:3182.5px;top:109.9px;font-size:17.5px;color:#8a8a8a;white-space:pre;line-height:0;">SGX Director - Settings</div>
<svg style="left:3646px;top:101.5px;" width="16" height="16" viewBox="0 0 16 16"><path d="M0.5 0.5 L15.5 15.5 M15.5 0.5 L0.5 15.5" stroke="#8a8a8a" stroke-width="1.3"/></svg>
<div style="position:absolute;left:3142px;top:132px;width:537px;height:543px;background:#434343;"></div>
<div style="position:absolute;left:3173.5px;top:174.6px;width:474px;height:270.6px;background:transparent;border:2.2px solid #e8e8e8;box-shadow:inset 1px 1px 0 #8c8c8c, 1px 1px 0 #8c8c8c;"></div>
<div style="position:absolute;left:3184px;top:162.6px;width:92px;height:24px;background:#434343;"></div>
<div style="position:absolute;left:3187px;top:174.5px;font-size:17px;color:#f2f2f2;white-space:pre;line-height:0;">Processing</div>
<div style="position:absolute;left:3188.8px;top:221.5px;font-size:17.5px;color:#f2f2f2;white-space:pre;line-height:0;">Languages Directory:</div>
<div style="position:absolute;left:3366px;top:203px;width:226.3px;height:30.4px;background:#404040;border-top:1.5px solid #262626;border-left:1.5px solid #262626;border-bottom:1px solid #4e4e4e;border-right:1px solid #4e4e4e;"></div>
<div style="position:absolute;left:3368.5px;top:219.7px;font-size:17.5px;color:#f2f2f2;white-space:pre;line-height:0;">s/berge/SG_DEV/languages</div>
<div style="position:absolute;left:3603px;top:201px;width:28.6px;height:37.5px;background:#434343;border-right:1.5px solid #222;border-bottom:1.5px solid #222;border-top:1px solid #555;border-left:1px solid #555;"></div>
<svg style="left:3606px;top:211px;" width="24" height="18" viewBox="0 0 24 18"><path d="M1.1 1.1 H9.6 L12.2 3.8 H22 V16 H1.1 Z" fill="none" stroke="#ffffff" stroke-width="2.2" stroke-linejoin="round"/></svg>
<div style="position:absolute;left:3188.8px;top:265.2px;font-size:17.5px;color:#f2f2f2;white-space:pre;line-height:0;">Pre-Roll (ms):</div>
<div style="position:absolute;left:3366px;top:248.6px;width:89.5px;height:29.9px;background:#424242;border-top:1.5px solid #262626;border-left:1.5px solid #262626;border-bottom:1px solid #4c4c4c;border-right:1px solid #4c4c4c;"></div>
<div style="position:absolute;left:3431.5px;top:251.6px;width:22px;height:24.9px;background:#424242;border-left:1px solid #2a2a2a;border-bottom:1.5px solid #222;border-top:1px solid #555;border-right:1px solid #555;"></div>
<svg style="left:3437px;top:259.6px;" width="13" height="8" viewBox="0 0 13 8"><path d="M0 0 H13 L6.5 7.5 Z" fill="#ffffff"/></svg>
<div style="position:absolute;left:3373px;top:263.7px;font-size:17.5px;color:#f2f2f2;white-space:pre;line-height:0;">Auto</div>
<div style="position:absolute;left:3468px;top:248.6px;width:163.6px;height:31.4px;background:#555555;border-top:1.5px solid #262626;border-left:1.5px solid #262626;border-bottom:1px solid #4e4e4e;border-right:1px solid #4e4e4e;"></div>
<div style="position:absolute;left:3474px;top:265.8px;font-size:17.5px;color:#9a9a9a;white-space:pre;line-height:0;">0</div>
<div style="position:absolute;left:3188.8px;top:306.5px;font-size:17.5px;color:#f2f2f2;white-space:pre;line-height:0;">Post-Roll (ms):</div>
<div style="position:absolute;left:3366px;top:290.7px;width:89.5px;height:30.3px;background:#424242;border-top:1.5px solid #262626;border-left:1.5px solid #262626;border-bottom:1px solid #4c4c4c;border-right:1px solid #4c4c4c;"></div>
<div style="position:absolute;left:3431.5px;top:293.7px;width:22px;height:25.3px;background:#424242;border-left:1px solid #2a2a2a;border-bottom:1.5px solid #222;border-top:1px solid #555;border-right:1px solid #555;"></div>
<svg style="left:3437px;top:301.9px;" width="13" height="8" viewBox="0 0 13 8"><path d="M0 0 H13 L6.5 7.5 Z" fill="#ffffff"/></svg>
<div style="position:absolute;left:3373px;top:306px;font-size:17.5px;color:#f2f2f2;white-space:pre;line-height:0;">Auto</div>
<div style="position:absolute;left:3468px;top:290.7px;width:163.6px;height:31.3px;background:#555555;border-top:1.5px solid #262626;border-left:1.5px solid #262626;border-bottom:1px solid #4e4e4e;border-right:1px solid #4e4e4e;"></div>
<div style="position:absolute;left:3474px;top:307.8px;font-size:17.5px;color:#9a9a9a;white-space:pre;line-height:0;">0</div>
<div style="position:absolute;left:3188.8px;top:348.9px;font-size:17.5px;color:#f2f2f2;white-space:pre;line-height:0;">Frame Rate (fps):</div>
<div style="position:absolute;left:3366px;top:332.3px;width:265.6px;height:30.8px;background:#404040;border-top:1.5px solid #262626;border-left:1.5px solid #262626;border-bottom:1px solid #4e4e4e;border-right:1px solid #4e4e4e;"></div>
<div style="position:absolute;left:3372px;top:349.2px;font-size:17.5px;color:#f2f2f2;white-space:pre;line-height:0;">30</div>
<div style="position:absolute;left:3188.8px;top:386.8px;font-size:17.5px;color:#f2f2f2;white-space:pre;line-height:0;">Active Start:</div>
<div style="position:absolute;left:3366px;top:375px;width:19.5px;height:19.5px;background:transparent;border:1.6px solid #e4e4e4;border-right-color:#bdbdbd;border-bottom-color:#bdbdbd;"></div>
<div style="position:absolute;left:3188.8px;top:419.7px;font-size:17.5px;color:#f2f2f2;white-space:pre;line-height:0;">Neutral Finish:</div>
<div style="position:absolute;left:3366px;top:408.6px;width:19.5px;height:19.5px;background:transparent;border:1.6px solid #e4e4e4;border-right-color:#bdbdbd;border-bottom-color:#bdbdbd;"></div>
<svg style="left:3369.5px;top:413.1px;" width="13" height="11" viewBox="0 0 13 11"><path d="M1 5.5 L4.8 9.3 L12 1.5" fill="none" stroke="#ffffff" stroke-width="2.6"/></svg>
<div style="position:absolute;left:3173.5px;top:470px;width:474.2px;height:173.1px;background:transparent;border:2.2px solid #e8e8e8;box-shadow:inset 1px 1px 0 #8c8c8c, 1px 1px 0 #8c8c8c;"></div>
<div style="position:absolute;left:3184px;top:458px;width:64px;height:24px;background:#434343;"></div>
<div style="position:absolute;left:3187px;top:469.9px;font-size:17px;color:#f2f2f2;white-space:pre;line-height:0;">Display</div>
<div style="position:absolute;left:3188.8px;top:514.6px;font-size:17.5px;color:#f2f2f2;white-space:pre;line-height:0;">Editor Font Size (pt):</div>
<div style="position:absolute;left:3388.8px;top:497.9px;width:243.2px;height:30.3px;background:#424242;border-top:1.5px solid #262626;border-left:1.5px solid #262626;border-bottom:1px solid #4e4e4e;border-right:1px solid #4e4e4e;"></div>
<div style="position:absolute;left:3606px;top:500.9px;width:22px;height:12.1px;background:#424242;border-left:1px solid #2a2a2a;border-top:1px solid #5a5a5a;border-bottom:1px solid #2a2a2a;"></div>
<div style="position:absolute;left:3606px;top:513px;width:22px;height:12.2px;background:#424242;border-left:1px solid #2a2a2a;border-top:1px solid #5a5a5a;border-bottom:1.5px solid #222;"></div>
<svg style="left:3613.5px;top:504px;" width="7" height="4" viewBox="0 0 7 4"><path d="M0 4 L3.5 0 L7 4Z" fill="#ffffff"/></svg>
<svg style="left:3613.5px;top:518px;" width="7" height="4" viewBox="0 0 7 4"><path d="M0 0 L3.5 4 L7 0Z" fill="#ffffff"/></svg>
<div style="position:absolute;left:3395.8px;top:513.2px;font-size:17.5px;color:#f2f2f2;white-space:pre;line-height:0;">14</div>
<div style="position:absolute;left:3188.8px;top:551.2px;font-size:17.5px;color:#f2f2f2;white-space:pre;line-height:0;">Dark Mode:</div>
<div style="position:absolute;left:3388px;top:540.8px;width:19.5px;height:19.5px;background:transparent;border:1.6px solid #e4e4e4;border-right-color:#bdbdbd;border-bottom-color:#bdbdbd;"></div>
<svg style="left:3391.5px;top:545.3px;" width="13" height="11" viewBox="0 0 13 11"><path d="M1 5.5 L4.8 9.3 L12 1.5" fill="none" stroke="#ffffff" stroke-width="2.6"/></svg>
<div style="position:absolute;left:3188.8px;top:584.7px;font-size:17.5px;color:#f2f2f2;white-space:pre;line-height:0;">Show Phone Alignment:</div>
<div style="position:absolute;left:3388px;top:573.6px;width:19.5px;height:19.5px;background:transparent;border:1.6px solid #e4e4e4;border-right-color:#bdbdbd;border-bottom-color:#bdbdbd;"></div>
<div style="position:absolute;left:3188.8px;top:617.6px;font-size:17.5px;color:#f2f2f2;white-space:pre;line-height:0;">Show Spectrogram</div>
<div style="position:absolute;left:3388px;top:606.5px;width:19.5px;height:19.5px;background:transparent;border:1.6px solid #e4e4e4;border-right-color:#bdbdbd;border-bottom-color:#bdbdbd;"></div>
</div></div>
</body></html>
